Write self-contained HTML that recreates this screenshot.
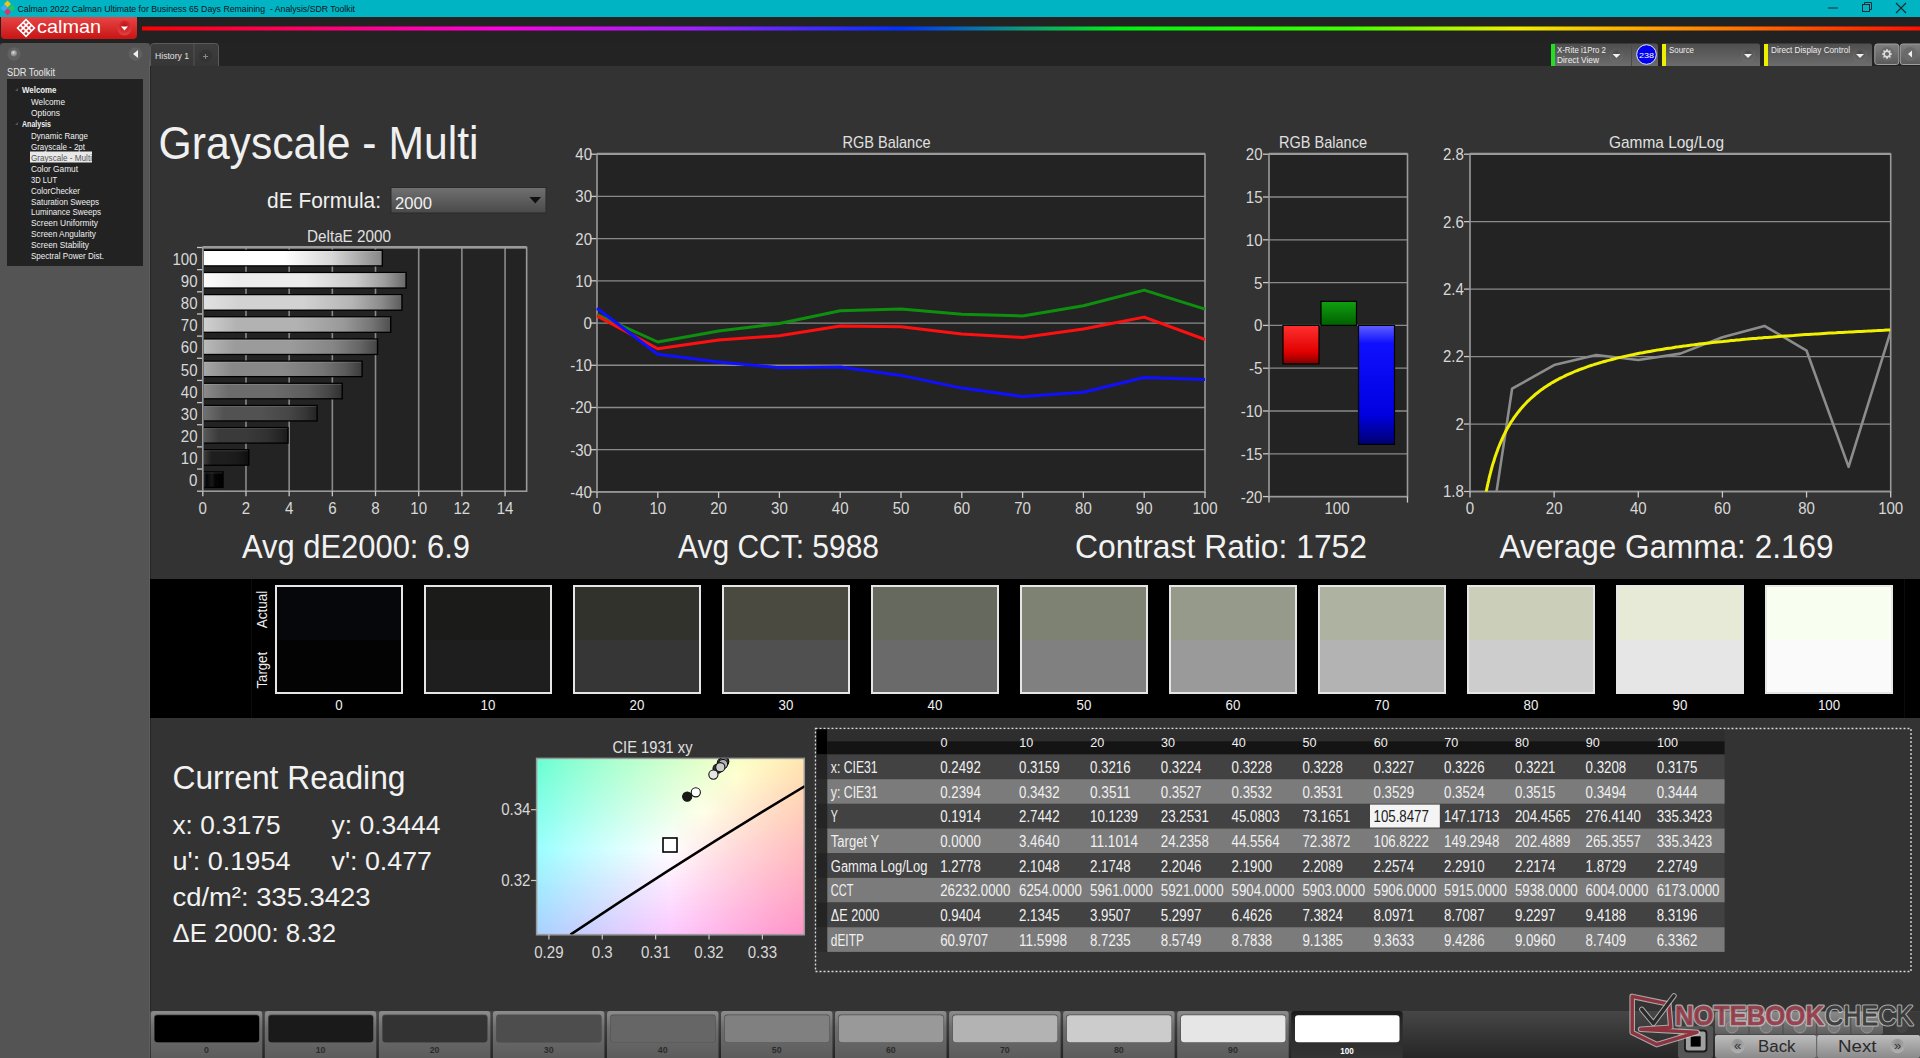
<!DOCTYPE html>
<html><head><meta charset="utf-8"><title>Calman</title>
<style>html,body{margin:0;padding:0;background:#333;overflow:hidden}svg{display:block}
text{font-family:"Liberation Sans", sans-serif;}</style></head>
<body><svg width="1920" height="1058" viewBox="0 0 1920 1058" font-family='"Liberation Sans", sans-serif'>
<defs><linearGradient id="gRed" x1="0" y1="0" x2="0" y2="1"><stop offset="0" stop-color="#e84545"/><stop offset="1" stop-color="#c81414"/></linearGradient><radialGradient id="gRedC" cx="0.5" cy="0.35" r="0.6"><stop offset="0" stop-color="#c01010"/><stop offset="1" stop-color="#e04040"/></radialGradient><linearGradient id="gRain" x1="142" y1="0" x2="1920" y2="0" gradientUnits="userSpaceOnUse"><stop offset="0" stop-color="#ff0000"/><stop offset="0.2" stop-color="#ff00e0"/><stop offset="0.31" stop-color="#a020ff"/><stop offset="0.426" stop-color="#0030ff"/><stop offset="0.5" stop-color="#10a070"/><stop offset="0.55" stop-color="#00f010"/><stop offset="0.68" stop-color="#40ff00"/><stop offset="0.773" stop-color="#f0f000"/><stop offset="0.85" stop-color="#ffa000"/><stop offset="1" stop-color="#ff1000"/></linearGradient><radialGradient id="gKnob" cx="0.5" cy="0.5" r="0.5"><stop offset="0" stop-color="#5a5a5a"/><stop offset="0.8" stop-color="#626262"/><stop offset="1" stop-color="#585858"/></radialGradient><radialGradient id="gBall" cx="0.4" cy="0.35" r="0.7"><stop offset="0" stop-color="#d8d8d8"/><stop offset="1" stop-color="#6a6a6a"/></radialGradient><linearGradient id="gTab" x1="0" y1="0" x2="0" y2="1"><stop offset="0" stop-color="#3e3e3e"/><stop offset="1" stop-color="#363636"/></linearGradient><linearGradient id="gTool" x1="0" y1="0" x2="0" y2="1"><stop offset="0" stop-color="#4e4e4e"/><stop offset="1" stop-color="#6c6c6c"/></linearGradient><radialGradient id="gDrop" cx="0.5" cy="0.3" r="0.6"><stop offset="0" stop-color="#4a4a4a"/><stop offset="1" stop-color="#6a6a6a"/></radialGradient><linearGradient id="gBtn" x1="0" y1="0" x2="0" y2="1"><stop offset="0" stop-color="#808080"/><stop offset="1" stop-color="#5a5a5a"/></linearGradient><linearGradient id="gCombo" x1="0" y1="0" x2="0" y2="1"><stop offset="0" stop-color="#707070"/><stop offset="1" stop-color="#4a4a4a"/></linearGradient><linearGradient id="gBar100" x1="0" y1="0" x2="1" y2="0"><stop offset="0" stop-color="#ffffff"/><stop offset="0.45" stop-color="#ffffff"/><stop offset="0.72" stop-color="#d7d7d7"/><stop offset="1" stop-color="#878787"/></linearGradient><linearGradient id="gBar90" x1="0" y1="0" x2="1" y2="0"><stop offset="0" stop-color="#fbfbfb"/><stop offset="0.18" stop-color="#ececec"/><stop offset="0.5" stop-color="#ececec"/><stop offset="0.75" stop-color="#cbcbcb"/><stop offset="0.9" stop-color="#9c9c9c"/><stop offset="1" stop-color="#6a6a6a"/></linearGradient><linearGradient id="gBar80" x1="0" y1="0" x2="1" y2="0"><stop offset="0" stop-color="#e1e1e1"/><stop offset="0.18" stop-color="#d2d2d2"/><stop offset="0.5" stop-color="#d2d2d2"/><stop offset="0.75" stop-color="#b5b5b5"/><stop offset="0.9" stop-color="#8b8b8b"/><stop offset="1" stop-color="#5e5e5e"/></linearGradient><linearGradient id="gBar70" x1="0" y1="0" x2="1" y2="0"><stop offset="0" stop-color="#d0d0d0"/><stop offset="0.18" stop-color="#b2b2b2"/><stop offset="0.5" stop-color="#b2b2b2"/><stop offset="0.75" stop-color="#999999"/><stop offset="0.9" stop-color="#757575"/><stop offset="1" stop-color="#505050"/></linearGradient><linearGradient id="gBar60" x1="0" y1="0" x2="1" y2="0"><stop offset="0" stop-color="#b9b9b9"/><stop offset="0.18" stop-color="#9b9b9b"/><stop offset="0.5" stop-color="#9b9b9b"/><stop offset="0.75" stop-color="#858585"/><stop offset="0.9" stop-color="#666666"/><stop offset="1" stop-color="#464646"/></linearGradient><linearGradient id="gBar50" x1="0" y1="0" x2="1" y2="0"><stop offset="0" stop-color="#a6a6a6"/><stop offset="0.18" stop-color="#888888"/><stop offset="0.5" stop-color="#888888"/><stop offset="0.75" stop-color="#757575"/><stop offset="0.9" stop-color="#5a5a5a"/><stop offset="1" stop-color="#3d3d3d"/></linearGradient><linearGradient id="gBar40" x1="0" y1="0" x2="1" y2="0"><stop offset="0" stop-color="#8a8a8a"/><stop offset="0.18" stop-color="#6c6c6c"/><stop offset="0.5" stop-color="#6c6c6c"/><stop offset="0.75" stop-color="#5d5d5d"/><stop offset="0.9" stop-color="#474747"/><stop offset="1" stop-color="#313131"/></linearGradient><linearGradient id="gBar30" x1="0" y1="0" x2="1" y2="0"><stop offset="0" stop-color="#707070"/><stop offset="0.18" stop-color="#525252"/><stop offset="0.5" stop-color="#525252"/><stop offset="0.75" stop-color="#474747"/><stop offset="0.9" stop-color="#363636"/><stop offset="1" stop-color="#252525"/></linearGradient><linearGradient id="gBar20" x1="0" y1="0" x2="1" y2="0"><stop offset="0" stop-color="#585858"/><stop offset="0.18" stop-color="#3a3a3a"/><stop offset="0.5" stop-color="#3a3a3a"/><stop offset="0.75" stop-color="#323232"/><stop offset="0.9" stop-color="#262626"/><stop offset="1" stop-color="#1a1a1a"/></linearGradient><linearGradient id="gBar10" x1="0" y1="0" x2="1" y2="0"><stop offset="0" stop-color="#3c3c3c"/><stop offset="0.18" stop-color="#1e1e1e"/><stop offset="0.5" stop-color="#1e1e1e"/><stop offset="0.75" stop-color="#1a1a1a"/><stop offset="0.9" stop-color="#141414"/><stop offset="1" stop-color="#0e0e0e"/></linearGradient><linearGradient id="gBar0" x1="0" y1="0" x2="1" y2="0"><stop offset="0" stop-color="#282828"/><stop offset="0.15" stop-color="#050505"/><stop offset="0.45" stop-color="#191919"/><stop offset="0.6" stop-color="#050505"/><stop offset="1" stop-color="#000000"/></linearGradient><linearGradient id="gR" x1="0" y1="0" x2="0" y2="1"><stop offset="0" stop-color="#ff3030"/><stop offset="0.7" stop-color="#e00000"/><stop offset="1" stop-color="#800000"/></linearGradient><linearGradient id="gG" x1="0" y1="0" x2="0" y2="1"><stop offset="0" stop-color="#10a010"/><stop offset="1" stop-color="#006000"/></linearGradient><linearGradient id="gB" x1="0" y1="0" x2="0" y2="1"><stop offset="0" stop-color="#6060ff"/><stop offset="0.15" stop-color="#1010ff"/><stop offset="0.75" stop-color="#0000e0"/><stop offset="1" stop-color="#000070"/></linearGradient><clipPath id="clipC"><rect x="536.6" y="758.4" width="267.7" height="176.2"/></clipPath><linearGradient id="cr0" x1="0" y1="0" x2="1" y2="0"><stop offset="0.000" stop-color="#67ffd3"/><stop offset="0.125" stop-color="#89ffd1"/><stop offset="0.250" stop-color="#a4ffd0"/><stop offset="0.375" stop-color="#bbffce"/><stop offset="0.500" stop-color="#d0ffcc"/><stop offset="0.625" stop-color="#e4ffca"/><stop offset="0.750" stop-color="#f8ffc8"/><stop offset="0.875" stop-color="#fff4bd"/><stop offset="1.000" stop-color="#ffe5af"/></linearGradient><linearGradient id="cr1" x1="0" y1="0" x2="1" y2="0"><stop offset="0.000" stop-color="#6affd4"/><stop offset="0.125" stop-color="#8bffd3"/><stop offset="0.250" stop-color="#a6ffd2"/><stop offset="0.375" stop-color="#bdffd0"/><stop offset="0.500" stop-color="#d2ffce"/><stop offset="0.625" stop-color="#e6ffcc"/><stop offset="0.750" stop-color="#faffca"/><stop offset="0.875" stop-color="#fff3be"/><stop offset="1.000" stop-color="#ffe3b0"/></linearGradient><linearGradient id="cr2" x1="0" y1="0" x2="1" y2="0"><stop offset="0.000" stop-color="#6cffd6"/><stop offset="0.125" stop-color="#8dffd5"/><stop offset="0.250" stop-color="#a8ffd4"/><stop offset="0.375" stop-color="#bfffd2"/><stop offset="0.500" stop-color="#d4ffd0"/><stop offset="0.625" stop-color="#e8ffce"/><stop offset="0.750" stop-color="#fcffcd"/><stop offset="0.875" stop-color="#fff1bf"/><stop offset="1.000" stop-color="#ffe1b0"/></linearGradient><linearGradient id="cr3" x1="0" y1="0" x2="1" y2="0"><stop offset="0.000" stop-color="#6effd8"/><stop offset="0.125" stop-color="#8fffd7"/><stop offset="0.250" stop-color="#a9ffd5"/><stop offset="0.375" stop-color="#c1ffd4"/><stop offset="0.500" stop-color="#d6ffd2"/><stop offset="0.625" stop-color="#eaffd1"/><stop offset="0.750" stop-color="#feffcf"/><stop offset="0.875" stop-color="#ffefbf"/><stop offset="1.000" stop-color="#ffdfb1"/></linearGradient><linearGradient id="cr4" x1="0" y1="0" x2="1" y2="0"><stop offset="0.000" stop-color="#71ffda"/><stop offset="0.125" stop-color="#91ffd9"/><stop offset="0.250" stop-color="#abffd7"/><stop offset="0.375" stop-color="#c3ffd6"/><stop offset="0.500" stop-color="#d8ffd5"/><stop offset="0.625" stop-color="#ecffd3"/><stop offset="0.750" stop-color="#fffed1"/><stop offset="0.875" stop-color="#ffedc0"/><stop offset="1.000" stop-color="#ffdeb2"/></linearGradient><linearGradient id="cr5" x1="0" y1="0" x2="1" y2="0"><stop offset="0.000" stop-color="#73ffdc"/><stop offset="0.125" stop-color="#93ffdb"/><stop offset="0.250" stop-color="#adffd9"/><stop offset="0.375" stop-color="#c5ffd8"/><stop offset="0.500" stop-color="#daffd7"/><stop offset="0.625" stop-color="#eeffd5"/><stop offset="0.750" stop-color="#fffcd1"/><stop offset="0.875" stop-color="#ffebc1"/><stop offset="1.000" stop-color="#ffdcb3"/></linearGradient><linearGradient id="cr6" x1="0" y1="0" x2="1" y2="0"><stop offset="0.000" stop-color="#75ffde"/><stop offset="0.125" stop-color="#95ffdd"/><stop offset="0.250" stop-color="#afffdc"/><stop offset="0.375" stop-color="#c7ffda"/><stop offset="0.500" stop-color="#dcffd9"/><stop offset="0.625" stop-color="#f0ffd7"/><stop offset="0.750" stop-color="#fffad2"/><stop offset="0.875" stop-color="#ffe9c1"/><stop offset="1.000" stop-color="#ffdab3"/></linearGradient><linearGradient id="cr7" x1="0" y1="0" x2="1" y2="0"><stop offset="0.000" stop-color="#78ffe0"/><stop offset="0.125" stop-color="#97ffdf"/><stop offset="0.250" stop-color="#b1ffde"/><stop offset="0.375" stop-color="#c8ffdc"/><stop offset="0.500" stop-color="#deffdb"/><stop offset="0.625" stop-color="#f2ffda"/><stop offset="0.750" stop-color="#fff8d2"/><stop offset="0.875" stop-color="#ffe7c2"/><stop offset="1.000" stop-color="#ffd8b4"/></linearGradient><linearGradient id="cr8" x1="0" y1="0" x2="1" y2="0"><stop offset="0.000" stop-color="#7affe2"/><stop offset="0.125" stop-color="#99ffe1"/><stop offset="0.250" stop-color="#b3ffe0"/><stop offset="0.375" stop-color="#caffde"/><stop offset="0.500" stop-color="#e0ffdd"/><stop offset="0.625" stop-color="#f5ffdc"/><stop offset="0.750" stop-color="#fff6d3"/><stop offset="0.875" stop-color="#ffe5c3"/><stop offset="1.000" stop-color="#ffd6b5"/></linearGradient><linearGradient id="cr9" x1="0" y1="0" x2="1" y2="0"><stop offset="0.000" stop-color="#7cffe4"/><stop offset="0.125" stop-color="#9bffe3"/><stop offset="0.250" stop-color="#b5ffe2"/><stop offset="0.375" stop-color="#ccffe1"/><stop offset="0.500" stop-color="#e2ffdf"/><stop offset="0.625" stop-color="#f7ffde"/><stop offset="0.750" stop-color="#fff4d3"/><stop offset="0.875" stop-color="#ffe3c3"/><stop offset="1.000" stop-color="#ffd5b5"/></linearGradient><linearGradient id="cr10" x1="0" y1="0" x2="1" y2="0"><stop offset="0.000" stop-color="#7effe6"/><stop offset="0.125" stop-color="#9dffe5"/><stop offset="0.250" stop-color="#b7ffe4"/><stop offset="0.375" stop-color="#ceffe3"/><stop offset="0.500" stop-color="#e4ffe2"/><stop offset="0.625" stop-color="#f9ffe1"/><stop offset="0.750" stop-color="#fff2d4"/><stop offset="0.875" stop-color="#ffe1c4"/><stop offset="1.000" stop-color="#ffd3b6"/></linearGradient><linearGradient id="cr11" x1="0" y1="0" x2="1" y2="0"><stop offset="0.000" stop-color="#81ffe8"/><stop offset="0.125" stop-color="#9fffe7"/><stop offset="0.250" stop-color="#b9ffe6"/><stop offset="0.375" stop-color="#d0ffe5"/><stop offset="0.500" stop-color="#e6ffe4"/><stop offset="0.625" stop-color="#fbffe3"/><stop offset="0.750" stop-color="#fff0d4"/><stop offset="0.875" stop-color="#ffdfc5"/><stop offset="1.000" stop-color="#ffd1b7"/></linearGradient><linearGradient id="cr12" x1="0" y1="0" x2="1" y2="0"><stop offset="0.000" stop-color="#83ffea"/><stop offset="0.125" stop-color="#a1ffe9"/><stop offset="0.250" stop-color="#bbffe8"/><stop offset="0.375" stop-color="#d3ffe7"/><stop offset="0.500" stop-color="#e8ffe6"/><stop offset="0.625" stop-color="#fdffe5"/><stop offset="0.750" stop-color="#ffeed5"/><stop offset="0.875" stop-color="#ffdec5"/><stop offset="1.000" stop-color="#ffcfb7"/></linearGradient><linearGradient id="cr13" x1="0" y1="0" x2="1" y2="0"><stop offset="0.000" stop-color="#85ffec"/><stop offset="0.125" stop-color="#a3ffeb"/><stop offset="0.250" stop-color="#bdffea"/><stop offset="0.375" stop-color="#d5ffe9"/><stop offset="0.500" stop-color="#eaffe9"/><stop offset="0.625" stop-color="#ffffe7"/><stop offset="0.750" stop-color="#ffecd5"/><stop offset="0.875" stop-color="#ffdcc6"/><stop offset="1.000" stop-color="#ffceb8"/></linearGradient><linearGradient id="cr14" x1="0" y1="0" x2="1" y2="0"><stop offset="0.000" stop-color="#87ffee"/><stop offset="0.125" stop-color="#a5ffed"/><stop offset="0.250" stop-color="#bfffec"/><stop offset="0.375" stop-color="#d7ffec"/><stop offset="0.500" stop-color="#edffeb"/><stop offset="0.625" stop-color="#fffce8"/><stop offset="0.750" stop-color="#ffead6"/><stop offset="0.875" stop-color="#ffdac6"/><stop offset="1.000" stop-color="#ffccb9"/></linearGradient><linearGradient id="cr15" x1="0" y1="0" x2="1" y2="0"><stop offset="0.000" stop-color="#8afff0"/><stop offset="0.125" stop-color="#a7ffef"/><stop offset="0.250" stop-color="#c1ffef"/><stop offset="0.375" stop-color="#d9ffee"/><stop offset="0.500" stop-color="#efffed"/><stop offset="0.625" stop-color="#fffae8"/><stop offset="0.750" stop-color="#ffe8d6"/><stop offset="0.875" stop-color="#ffd8c7"/><stop offset="1.000" stop-color="#ffcab9"/></linearGradient><linearGradient id="cr16" x1="0" y1="0" x2="1" y2="0"><stop offset="0.000" stop-color="#8cfff2"/><stop offset="0.125" stop-color="#aafff1"/><stop offset="0.250" stop-color="#c3fff1"/><stop offset="0.375" stop-color="#dbfff0"/><stop offset="0.500" stop-color="#f1fff0"/><stop offset="0.625" stop-color="#fff8e8"/><stop offset="0.750" stop-color="#ffe6d7"/><stop offset="0.875" stop-color="#ffd6c7"/><stop offset="1.000" stop-color="#ffc8ba"/></linearGradient><linearGradient id="cr17" x1="0" y1="0" x2="1" y2="0"><stop offset="0.000" stop-color="#8efff4"/><stop offset="0.125" stop-color="#acfff4"/><stop offset="0.250" stop-color="#c6fff3"/><stop offset="0.375" stop-color="#ddfff3"/><stop offset="0.500" stop-color="#f3fff2"/><stop offset="0.625" stop-color="#fff6e9"/><stop offset="0.750" stop-color="#ffe4d7"/><stop offset="0.875" stop-color="#ffd4c8"/><stop offset="1.000" stop-color="#ffc6ba"/></linearGradient><linearGradient id="cr18" x1="0" y1="0" x2="1" y2="0"><stop offset="0.000" stop-color="#90fff6"/><stop offset="0.125" stop-color="#aefff6"/><stop offset="0.250" stop-color="#c8fff5"/><stop offset="0.375" stop-color="#dffff5"/><stop offset="0.500" stop-color="#f6fff5"/><stop offset="0.625" stop-color="#fff3e9"/><stop offset="0.750" stop-color="#ffe2d8"/><stop offset="0.875" stop-color="#ffd2c8"/><stop offset="1.000" stop-color="#ffc5bb"/></linearGradient><linearGradient id="cr19" x1="0" y1="0" x2="1" y2="0"><stop offset="0.000" stop-color="#93fff8"/><stop offset="0.125" stop-color="#b0fff8"/><stop offset="0.250" stop-color="#cafff8"/><stop offset="0.375" stop-color="#e2fff7"/><stop offset="0.500" stop-color="#f8fff7"/><stop offset="0.625" stop-color="#fff1ea"/><stop offset="0.750" stop-color="#ffe0d8"/><stop offset="0.875" stop-color="#ffd0c9"/><stop offset="1.000" stop-color="#ffc3bc"/></linearGradient><linearGradient id="cr20" x1="0" y1="0" x2="1" y2="0"><stop offset="0.000" stop-color="#95fffa"/><stop offset="0.125" stop-color="#b2fffa"/><stop offset="0.250" stop-color="#ccfffa"/><stop offset="0.375" stop-color="#e4fffa"/><stop offset="0.500" stop-color="#fafffa"/><stop offset="0.625" stop-color="#ffefea"/><stop offset="0.750" stop-color="#ffddd9"/><stop offset="0.875" stop-color="#ffceca"/><stop offset="1.000" stop-color="#ffc1bc"/></linearGradient><linearGradient id="cr21" x1="0" y1="0" x2="1" y2="0"><stop offset="0.000" stop-color="#97fffd"/><stop offset="0.125" stop-color="#b4fffc"/><stop offset="0.250" stop-color="#cefffc"/><stop offset="0.375" stop-color="#e6fffc"/><stop offset="0.500" stop-color="#fdfffc"/><stop offset="0.625" stop-color="#ffedea"/><stop offset="0.750" stop-color="#ffdbd9"/><stop offset="0.875" stop-color="#ffccca"/><stop offset="1.000" stop-color="#ffbfbd"/></linearGradient><linearGradient id="cr22" x1="0" y1="0" x2="1" y2="0"><stop offset="0.000" stop-color="#99ffff"/><stop offset="0.125" stop-color="#b7ffff"/><stop offset="0.250" stop-color="#d0ffff"/><stop offset="0.375" stop-color="#e8ffff"/><stop offset="0.500" stop-color="#ffffff"/><stop offset="0.625" stop-color="#ffebeb"/><stop offset="0.750" stop-color="#ffd9d9"/><stop offset="0.875" stop-color="#ffcacb"/><stop offset="1.000" stop-color="#ffbdbd"/></linearGradient><linearGradient id="cr23" x1="0" y1="0" x2="1" y2="0"><stop offset="0.000" stop-color="#9afdff"/><stop offset="0.125" stop-color="#b7fdff"/><stop offset="0.250" stop-color="#d1fdff"/><stop offset="0.375" stop-color="#e8fdff"/><stop offset="0.500" stop-color="#fffcff"/><stop offset="0.625" stop-color="#ffe8eb"/><stop offset="0.750" stop-color="#ffd7da"/><stop offset="0.875" stop-color="#ffc9cb"/><stop offset="1.000" stop-color="#ffbbbe"/></linearGradient><linearGradient id="cr24" x1="0" y1="0" x2="1" y2="0"><stop offset="0.000" stop-color="#9bfbff"/><stop offset="0.125" stop-color="#b8fbff"/><stop offset="0.250" stop-color="#d1faff"/><stop offset="0.375" stop-color="#e9faff"/><stop offset="0.500" stop-color="#fffaff"/><stop offset="0.625" stop-color="#ffe6eb"/><stop offset="0.750" stop-color="#ffd5da"/><stop offset="0.875" stop-color="#ffc7cc"/><stop offset="1.000" stop-color="#ffbabe"/></linearGradient><linearGradient id="cr25" x1="0" y1="0" x2="1" y2="0"><stop offset="0.000" stop-color="#9cf9ff"/><stop offset="0.125" stop-color="#b8f8ff"/><stop offset="0.250" stop-color="#d1f8ff"/><stop offset="0.375" stop-color="#e9f8ff"/><stop offset="0.500" stop-color="#fff7ff"/><stop offset="0.625" stop-color="#ffe4ec"/><stop offset="0.750" stop-color="#ffd3db"/><stop offset="0.875" stop-color="#ffc5cc"/><stop offset="1.000" stop-color="#ffb8bf"/></linearGradient><linearGradient id="cr26" x1="0" y1="0" x2="1" y2="0"><stop offset="0.000" stop-color="#9df6ff"/><stop offset="0.125" stop-color="#b9f6ff"/><stop offset="0.250" stop-color="#d2f6ff"/><stop offset="0.375" stop-color="#e9f5ff"/><stop offset="0.500" stop-color="#fef5ff"/><stop offset="0.625" stop-color="#ffe2ec"/><stop offset="0.750" stop-color="#ffd1db"/><stop offset="0.875" stop-color="#ffc3cc"/><stop offset="1.000" stop-color="#ffb6c0"/></linearGradient><linearGradient id="cr27" x1="0" y1="0" x2="1" y2="0"><stop offset="0.000" stop-color="#9ef4ff"/><stop offset="0.125" stop-color="#b9f4ff"/><stop offset="0.250" stop-color="#d2f3ff"/><stop offset="0.375" stop-color="#e9f3ff"/><stop offset="0.500" stop-color="#fef2ff"/><stop offset="0.625" stop-color="#ffe0ec"/><stop offset="0.750" stop-color="#ffcfdb"/><stop offset="0.875" stop-color="#ffc1cd"/><stop offset="1.000" stop-color="#ffb4c0"/></linearGradient><linearGradient id="cr28" x1="0" y1="0" x2="1" y2="0"><stop offset="0.000" stop-color="#9ff2ff"/><stop offset="0.125" stop-color="#baf1ff"/><stop offset="0.250" stop-color="#d2f1ff"/><stop offset="0.375" stop-color="#e9f0ff"/><stop offset="0.500" stop-color="#fef0ff"/><stop offset="0.625" stop-color="#ffddec"/><stop offset="0.750" stop-color="#ffcddc"/><stop offset="0.875" stop-color="#ffbfcd"/><stop offset="1.000" stop-color="#ffb2c1"/></linearGradient><linearGradient id="cr29" x1="0" y1="0" x2="1" y2="0"><stop offset="0.000" stop-color="#9ff0ff"/><stop offset="0.125" stop-color="#baefff"/><stop offset="0.250" stop-color="#d2eeff"/><stop offset="0.375" stop-color="#e9eeff"/><stop offset="0.500" stop-color="#feedff"/><stop offset="0.625" stop-color="#ffdbed"/><stop offset="0.750" stop-color="#ffcbdc"/><stop offset="0.875" stop-color="#ffbdce"/><stop offset="1.000" stop-color="#ffb0c1"/></linearGradient><linearGradient id="cr30" x1="0" y1="0" x2="1" y2="0"><stop offset="0.000" stop-color="#a0eeff"/><stop offset="0.125" stop-color="#bbedff"/><stop offset="0.250" stop-color="#d2ecff"/><stop offset="0.375" stop-color="#e9ebff"/><stop offset="0.500" stop-color="#feeaff"/><stop offset="0.625" stop-color="#ffd9ed"/><stop offset="0.750" stop-color="#ffc9dd"/><stop offset="0.875" stop-color="#ffbbce"/><stop offset="1.000" stop-color="#ffaec2"/></linearGradient><linearGradient id="cr31" x1="0" y1="0" x2="1" y2="0"><stop offset="0.000" stop-color="#a1ebff"/><stop offset="0.125" stop-color="#bbebff"/><stop offset="0.250" stop-color="#d3eaff"/><stop offset="0.375" stop-color="#e9e9ff"/><stop offset="0.500" stop-color="#fee8ff"/><stop offset="0.625" stop-color="#ffd7ed"/><stop offset="0.750" stop-color="#ffc7dd"/><stop offset="0.875" stop-color="#ffb9cf"/><stop offset="1.000" stop-color="#ffadc2"/></linearGradient><linearGradient id="cr32" x1="0" y1="0" x2="1" y2="0"><stop offset="0.000" stop-color="#a2e9ff"/><stop offset="0.125" stop-color="#bbe8ff"/><stop offset="0.250" stop-color="#d3e7ff"/><stop offset="0.375" stop-color="#e9e6ff"/><stop offset="0.500" stop-color="#fde5ff"/><stop offset="0.625" stop-color="#ffd5ee"/><stop offset="0.750" stop-color="#ffc5dd"/><stop offset="0.875" stop-color="#ffb7cf"/><stop offset="1.000" stop-color="#ffabc3"/></linearGradient><linearGradient id="cr33" x1="0" y1="0" x2="1" y2="0"><stop offset="0.000" stop-color="#a2e7ff"/><stop offset="0.125" stop-color="#bce6ff"/><stop offset="0.250" stop-color="#d3e5ff"/><stop offset="0.375" stop-color="#e9e4ff"/><stop offset="0.500" stop-color="#fde3ff"/><stop offset="0.625" stop-color="#ffd2ee"/><stop offset="0.750" stop-color="#ffc3de"/><stop offset="0.875" stop-color="#ffb5d0"/><stop offset="1.000" stop-color="#ffa9c3"/></linearGradient><linearGradient id="cr34" x1="0" y1="0" x2="1" y2="0"><stop offset="0.000" stop-color="#a3e5ff"/><stop offset="0.125" stop-color="#bce4ff"/><stop offset="0.250" stop-color="#d3e3ff"/><stop offset="0.375" stop-color="#e9e2ff"/><stop offset="0.500" stop-color="#fde0ff"/><stop offset="0.625" stop-color="#ffd0ee"/><stop offset="0.750" stop-color="#ffc1de"/><stop offset="0.875" stop-color="#ffb3d0"/><stop offset="1.000" stop-color="#ffa7c4"/></linearGradient><linearGradient id="cr35" x1="0" y1="0" x2="1" y2="0"><stop offset="0.000" stop-color="#a4e3ff"/><stop offset="0.125" stop-color="#bde2ff"/><stop offset="0.250" stop-color="#d3e0ff"/><stop offset="0.375" stop-color="#e9dfff"/><stop offset="0.500" stop-color="#fddeff"/><stop offset="0.625" stop-color="#ffceee"/><stop offset="0.750" stop-color="#ffbfde"/><stop offset="0.875" stop-color="#ffb1d1"/><stop offset="1.000" stop-color="#ffa5c4"/></linearGradient><linearGradient id="cr36" x1="0" y1="0" x2="1" y2="0"><stop offset="0.000" stop-color="#a4e1ff"/><stop offset="0.125" stop-color="#bddfff"/><stop offset="0.250" stop-color="#d4deff"/><stop offset="0.375" stop-color="#e9ddff"/><stop offset="0.500" stop-color="#fddbff"/><stop offset="0.625" stop-color="#ffccef"/><stop offset="0.750" stop-color="#ffbddf"/><stop offset="0.875" stop-color="#ffafd1"/><stop offset="1.000" stop-color="#ffa3c5"/></linearGradient><linearGradient id="cr37" x1="0" y1="0" x2="1" y2="0"><stop offset="0.000" stop-color="#a5deff"/><stop offset="0.125" stop-color="#bdddff"/><stop offset="0.250" stop-color="#d4dcff"/><stop offset="0.375" stop-color="#e9daff"/><stop offset="0.500" stop-color="#fdd9ff"/><stop offset="0.625" stop-color="#ffcaef"/><stop offset="0.750" stop-color="#ffbadf"/><stop offset="0.875" stop-color="#ffadd1"/><stop offset="1.000" stop-color="#ffa1c5"/></linearGradient><linearGradient id="cr38" x1="0" y1="0" x2="1" y2="0"><stop offset="0.000" stop-color="#a6dcff"/><stop offset="0.125" stop-color="#bedbff"/><stop offset="0.250" stop-color="#d4daff"/><stop offset="0.375" stop-color="#e9d8ff"/><stop offset="0.500" stop-color="#fdd6ff"/><stop offset="0.625" stop-color="#ffc7ef"/><stop offset="0.750" stop-color="#ffb8e0"/><stop offset="0.875" stop-color="#ffabd2"/><stop offset="1.000" stop-color="#ff9fc6"/></linearGradient><linearGradient id="cr39" x1="0" y1="0" x2="1" y2="0"><stop offset="0.000" stop-color="#a6daff"/><stop offset="0.125" stop-color="#bed9ff"/><stop offset="0.250" stop-color="#d4d7ff"/><stop offset="0.375" stop-color="#e9d6ff"/><stop offset="0.500" stop-color="#fcd4ff"/><stop offset="0.625" stop-color="#ffc5f0"/><stop offset="0.750" stop-color="#ffb6e0"/><stop offset="0.875" stop-color="#ffa9d2"/><stop offset="1.000" stop-color="#ff9dc6"/></linearGradient><linearGradient id="cr40" x1="0" y1="0" x2="1" y2="0"><stop offset="0.000" stop-color="#a7d8ff"/><stop offset="0.125" stop-color="#bfd7ff"/><stop offset="0.250" stop-color="#d4d5ff"/><stop offset="0.375" stop-color="#e9d3ff"/><stop offset="0.500" stop-color="#fcd1ff"/><stop offset="0.625" stop-color="#ffc3f0"/><stop offset="0.750" stop-color="#ffb4e0"/><stop offset="0.875" stop-color="#ffa7d3"/><stop offset="1.000" stop-color="#ff9bc6"/></linearGradient><linearGradient id="cr41" x1="0" y1="0" x2="1" y2="0"><stop offset="0.000" stop-color="#a7d6ff"/><stop offset="0.125" stop-color="#bfd4ff"/><stop offset="0.250" stop-color="#d4d3ff"/><stop offset="0.375" stop-color="#e9d1ff"/><stop offset="0.500" stop-color="#fccfff"/><stop offset="0.625" stop-color="#ffc1f0"/><stop offset="0.750" stop-color="#ffb2e1"/><stop offset="0.875" stop-color="#ffa5d3"/><stop offset="1.000" stop-color="#ff99c7"/></linearGradient><linearGradient id="cr42" x1="0" y1="0" x2="1" y2="0"><stop offset="0.000" stop-color="#a8d4ff"/><stop offset="0.125" stop-color="#bfd2ff"/><stop offset="0.250" stop-color="#d5d0ff"/><stop offset="0.375" stop-color="#e9cfff"/><stop offset="0.500" stop-color="#fcccff"/><stop offset="0.625" stop-color="#ffbef0"/><stop offset="0.750" stop-color="#ffb0e1"/><stop offset="0.875" stop-color="#ffa3d3"/><stop offset="1.000" stop-color="#ff97c7"/></linearGradient><linearGradient id="cr43" x1="0" y1="0" x2="1" y2="0"><stop offset="0.000" stop-color="#a9d2ff"/><stop offset="0.125" stop-color="#c0d0ff"/><stop offset="0.250" stop-color="#d5ceff"/><stop offset="0.375" stop-color="#e9ccff"/><stop offset="0.500" stop-color="#fccaff"/><stop offset="0.625" stop-color="#ffbcf1"/><stop offset="0.750" stop-color="#ffaee1"/><stop offset="0.875" stop-color="#ffa1d4"/><stop offset="1.000" stop-color="#ff95c8"/></linearGradient><linearGradient id="gBar" x1="0" y1="0" x2="0" y2="1"><stop offset="0" stop-color="#464646"/><stop offset="1" stop-color="#262626"/></linearGradient><linearGradient id="gSw" x1="0" y1="0" x2="0" y2="1"><stop offset="0" stop-color="#8c8c8c"/><stop offset="0.35" stop-color="#6e6e6e"/><stop offset="1" stop-color="#5c5c5c"/></linearGradient><linearGradient id="gSwSel" x1="0" y1="0" x2="0" y2="1"><stop offset="0" stop-color="#1a1a1a"/><stop offset="0.3" stop-color="#2a2a2a"/><stop offset="1" stop-color="#343434"/></linearGradient><linearGradient id="gIco" x1="0" y1="0" x2="0" y2="1"><stop offset="0" stop-color="#8a8a8a"/><stop offset="1" stop-color="#5e5e5e"/></linearGradient><linearGradient id="gBk" x1="0" y1="0" x2="0" y2="1"><stop offset="0" stop-color="#bdbdbd"/><stop offset="1" stop-color="#8a8a8a"/></linearGradient><radialGradient id="gArr" cx="0.5" cy="0.3" r="0.7"><stop offset="0" stop-color="#8c8c8c"/><stop offset="1" stop-color="#b4b4b4"/></radialGradient></defs>
<rect x="0" y="0" width="1920" height="1058" fill="#333333"/>
<rect x="0" y="0" width="1920" height="17" fill="#00b4c4"/>
<rect x="0" y="17" width="1920" height="26" fill="#222222"/>
<rect x="150" y="43" width="1770" height="23" fill="#232323"/>
<rect x="0" y="43" width="150" height="1015" fill="#545454" rx="4"/>
<rect x="0" y="60" width="150" height="998" fill="#545454"/>
<rect x="149" y="60" width="1" height="998" fill="#5e5e5e"/>
<rect x="150" y="66" width="1" height="992" fill="#262626"/>
<g transform="translate(8,8)"><rect x="-3" y="-6.5" width="5" height="5" fill="#f2c21b" transform="rotate(45 -0.5 -4)"/><rect x="-6.5" y="-2.5" width="5" height="5" fill="#3fa9f5" transform="rotate(45 -4 0)"/><rect x="1.5" y="-2.5" width="5" height="5" fill="#22c55e" transform="rotate(45 4 0)"/><rect x="-3" y="1.5" width="5" height="5" fill="#e0336b" transform="rotate(45 -0.5 4)"/></g>
<text x="17.5" y="12.3" font-size="9.4" fill="#081418" textLength="337.5" lengthAdjust="spacingAndGlyphs">Calman 2022 Calman Ultimate for Business 65 Days Remaining  - Analysis/SDR Toolkit</text>
<line x1="1828" y1="8" x2="1838" y2="8" stroke="#1a2a30" stroke-width="1"/>
<rect x="1862.5" y="4.5" width="7" height="7" fill="none" stroke="#1a2a30" stroke-width="1"/>
<path d="M1864.5 4.5 V2.5 H1871.5 V9.5 H1869.5" fill="none" stroke="#1a2a30" stroke-width="1"/>
<path d="M1896 3 L1906 13 M1906 3 L1896 13" stroke="#1a2a30" stroke-width="1.2"/>
<path d="M1 17 H137 V35 Q137 39 133 39 H5 Q1 39 1 35 Z" fill="url(#gRed)"/>
<g transform="translate(26,28) rotate(45)" fill="none" stroke="#fff" stroke-width="1.6"><rect x="-6" y="-6" width="12" height="12"/><line x1="-6" y1="-2" x2="6" y2="-2"/><line x1="-6" y1="2" x2="6" y2="2"/><line x1="-2" y1="-6" x2="-2" y2="6"/><line x1="2" y1="-6" x2="2" y2="6"/></g>
<text x="37" y="33" font-size="19" fill="#ffffff" textLength="64" lengthAdjust="spacingAndGlyphs">calman</text>
<ellipse cx="124.5" cy="28" rx="7" ry="7.5" fill="url(#gRedC)"/>
<path d="M121 26.5 L128 26.5 L124.5 30.5 Z" fill="#fff"/>
<rect x="142" y="26.5" width="1778" height="4" fill="url(#gRain)"/>
<circle cx="14" cy="54" r="7" fill="url(#gKnob)"/>
<circle cx="14" cy="53.5" r="3.2" fill="url(#gBall)"/>
<circle cx="135.5" cy="54" r="7" fill="url(#gKnob)"/>
<path d="M133 54 L138 50 L138 58 Z" fill="#f0f0f0"/>
<text x="7" y="76" font-size="10" fill="#e8e8e8" textLength="48" lengthAdjust="spacingAndGlyphs">SDR Toolkit</text>
<rect x="7" y="79" width="136" height="187" fill="#222222"/>
<text x="22" y="93" font-size="8.2" fill="#f0f0f0" textLength="34.5" lengthAdjust="spacingAndGlyphs" font-weight="bold">Welcome</text>
<path d="M15 91 L18 88 L18 91 Z" fill="#555"/>
<text x="31" y="105" font-size="8.2" fill="#f0f0f0" textLength="34" lengthAdjust="spacingAndGlyphs">Welcome</text>
<text x="31" y="115.5" font-size="8.2" fill="#f0f0f0" textLength="29" lengthAdjust="spacingAndGlyphs">Options</text>
<text x="22" y="127" font-size="8.2" fill="#f0f0f0" textLength="29" lengthAdjust="spacingAndGlyphs" font-weight="bold">Analysis</text>
<path d="M15 125 L18 122 L18 125 Z" fill="#555"/>
<text x="31" y="139" font-size="8.2" fill="#f0f0f0" textLength="57" lengthAdjust="spacingAndGlyphs">Dynamic Range</text>
<text x="31" y="149.5" font-size="8.2" fill="#f0f0f0" textLength="54" lengthAdjust="spacingAndGlyphs">Grayscale - 2pt</text>
<rect x="30" y="151.5" width="62" height="11" fill="#e8e8e8"/>
<text x="31" y="161" font-size="8.2" fill="#555555" textLength="61" lengthAdjust="spacingAndGlyphs">Grayscale - Multi</text>
<text x="31" y="172" font-size="8.2" fill="#f0f0f0" textLength="47" lengthAdjust="spacingAndGlyphs">Color Gamut</text>
<text x="31" y="182.5" font-size="8.2" fill="#f0f0f0" textLength="26" lengthAdjust="spacingAndGlyphs">3D LUT</text>
<text x="31" y="193.5" font-size="8.2" fill="#f0f0f0" textLength="49" lengthAdjust="spacingAndGlyphs">ColorChecker</text>
<text x="31" y="204.5" font-size="8.2" fill="#f0f0f0" textLength="68" lengthAdjust="spacingAndGlyphs">Saturation Sweeps</text>
<text x="31" y="215" font-size="8.2" fill="#f0f0f0" textLength="70" lengthAdjust="spacingAndGlyphs">Luminance Sweeps</text>
<text x="31" y="226" font-size="8.2" fill="#f0f0f0" textLength="67" lengthAdjust="spacingAndGlyphs">Screen Uniformity</text>
<text x="31" y="237" font-size="8.2" fill="#f0f0f0" textLength="65" lengthAdjust="spacingAndGlyphs">Screen Angularity</text>
<text x="31" y="247.5" font-size="8.2" fill="#f0f0f0" textLength="58" lengthAdjust="spacingAndGlyphs">Screen Stability</text>
<text x="31" y="258.5" font-size="8.2" fill="#f0f0f0" textLength="73" lengthAdjust="spacingAndGlyphs">Spectral Power Dist.</text>
<path d="M150.5 66 V46.5 Q150.5 43.5 153.5 43.5 H215.5 Q218.5 43.5 218.5 46.5 V66 Z" fill="url(#gTab)"/>
<path d="M150.5 66 V46.5 Q150.5 43.5 153.5 43.5 H215.5 Q218.5 43.5 218.5 46.5 V66" fill="none" stroke="#5a5a5a" stroke-width="1"/>
<line x1="194" y1="44" x2="194" y2="66" stroke="#505050" stroke-width="1.2"/>
<text x="155" y="59" font-size="9" fill="#e0e0e0" textLength="34" lengthAdjust="spacingAndGlyphs">History 1</text>
<circle cx="205.5" cy="56" r="6.5" fill="#333"/>
<path d="M203 56.5 H208 M205.5 54 V59" stroke="#888" stroke-width="1"/>
<path d="M1551 66 V46 Q1551 43.5 1553.5 43.5 H1655.5 Q1658 43.5 1658 46 V66 Z" fill="url(#gTool)"/>
<rect x="1551" y="44" width="4" height="22" fill="#22dd22"/>
<text x="1557" y="52.5" font-size="8.5" fill="#eeeeee" textLength="49" lengthAdjust="spacingAndGlyphs">X-Rite i1Pro 2</text>
<text x="1557" y="63" font-size="8.5" fill="#eeeeee" textLength="42" lengthAdjust="spacingAndGlyphs">Direct View</text>
<circle cx="1616.5" cy="55.5" r="7" fill="url(#gDrop)"/>
<path d="M1612.5 54 H1620.5 L1616.5 58 Z" fill="#f0f0f0"/>
<line x1="1631.5" y1="45" x2="1631.5" y2="66" stroke="#4a4a4a" stroke-width="1"/>
<circle cx="1646.5" cy="54.5" r="9.8" fill="#0000ee" stroke="#e8e8ff" stroke-width="1"/>
<text x="1646.5" y="57.5" font-size="7.5" fill="#ffffff" text-anchor="middle" textLength="15" lengthAdjust="spacingAndGlyphs">238</text>
<path d="M1662 66 V46 Q1662 43.5 1664.5 43.5 H1757.5 Q1760 43.5 1760 46 V66 Z" fill="url(#gTool)"/>
<rect x="1662" y="44" width="4" height="22" fill="#eeee00"/>
<text x="1669" y="52.5" font-size="8.5" fill="#eeeeee" textLength="25" lengthAdjust="spacingAndGlyphs">Source</text>
<circle cx="1748" cy="55.5" r="7" fill="url(#gDrop)"/>
<path d="M1744 54 H1752 L1748 58 Z" fill="#f0f0f0"/>
<path d="M1764 66 V46 Q1764 43.5 1766.5 43.5 H1869.5 Q1872 43.5 1872 46 V66 Z" fill="url(#gTool)"/>
<rect x="1764" y="44" width="4" height="22" fill="#eeee00"/>
<text x="1771" y="52.5" font-size="8.5" fill="#eeeeee" textLength="79" lengthAdjust="spacingAndGlyphs">Direct Display Control</text>
<circle cx="1860" cy="55.5" r="7" fill="url(#gDrop)"/>
<path d="M1856 54 H1864 L1860 58 Z" fill="#f0f0f0"/>
<rect x="1874.8" y="44" width="24" height="20.5" rx="2.5" fill="url(#gBtn)" stroke="#a0a0a0" stroke-width="1"/>
<circle cx="1887" cy="54" r="7" fill="#6a6a6a"/>
<polygon points="1891.98,53.51 1891.98,54.49 1890.54,55.07 1890.26,55.74 1890.87,57.17 1890.17,57.87 1888.74,57.26 1888.07,57.54 1887.49,58.98 1886.51,58.98 1885.93,57.54 1885.26,57.26 1883.83,57.87 1883.13,57.17 1883.74,55.74 1883.46,55.07 1882.02,54.49 1882.02,53.51 1883.46,52.93 1883.74,52.26 1883.13,50.83 1883.83,50.13 1885.26,50.74 1885.93,50.46 1886.51,49.02 1887.49,49.02 1888.07,50.46 1888.74,50.74 1890.17,50.13 1890.87,50.83 1890.26,52.26 1890.54,52.93" fill="#dcdcdc"/>
<circle cx="1887" cy="54" r="2.1" fill="#6a6a6a"/>
<rect x="1900.3" y="44" width="24" height="20.5" rx="2.5" fill="url(#gBtn)" stroke="#a0a0a0" stroke-width="1"/>
<circle cx="1910" cy="54" r="7" fill="#6a6a6a"/>
<path d="M1908 54 L1912 50.5 L1912 57.5 Z" fill="#f0f0f0"/>
<text x="158.5" y="158.8" font-size="47" fill="#f0f0f0" textLength="320" lengthAdjust="spacingAndGlyphs">Grayscale - Multi</text>
<text x="267" y="208" font-size="21.5" fill="#f0f0f0" textLength="114" lengthAdjust="spacingAndGlyphs">dE Formula:</text>
<rect x="391" y="187.5" width="155" height="25.5" fill="url(#gCombo)" stroke="#2a2a2a" stroke-width="1"/>
<text x="395" y="209" font-size="17" fill="#f0f0f0" textLength="37" lengthAdjust="spacingAndGlyphs">2000</text>
<path d="M529.5 197 H541 L535.25 203.5 Z" fill="#111"/>
<text x="349" y="242" font-size="16.2" fill="#e0e0e0" text-anchor="middle" textLength="84" lengthAdjust="spacingAndGlyphs">DeltaE 2000</text>
<rect x="202.8" y="247.5" width="323.8500000000001" height="243.7" fill="#232323"/>
<line x1="245.98000000000002" y1="247.5" x2="245.98000000000002" y2="491.2" stroke="#8a8a8a" stroke-width="1.6"/>
<line x1="289.16" y1="247.5" x2="289.16" y2="491.2" stroke="#8a8a8a" stroke-width="1.6"/>
<line x1="332.34000000000003" y1="247.5" x2="332.34000000000003" y2="491.2" stroke="#8a8a8a" stroke-width="1.6"/>
<line x1="375.52" y1="247.5" x2="375.52" y2="491.2" stroke="#8a8a8a" stroke-width="1.6"/>
<line x1="418.70000000000005" y1="247.5" x2="418.70000000000005" y2="491.2" stroke="#8a8a8a" stroke-width="1.6"/>
<line x1="461.88" y1="247.5" x2="461.88" y2="491.2" stroke="#8a8a8a" stroke-width="1.6"/>
<line x1="505.06" y1="247.5" x2="505.06" y2="491.2" stroke="#8a8a8a" stroke-width="1.6"/>
<rect x="203.8" y="249.7" width="179.22016399999998" height="16.8" fill="#000000"/>
<rect x="203.8" y="251.0" width="177.82016399999998" height="14.2" fill="url(#gBar100)"/>
<rect x="203.8" y="251.0" width="177.82016399999998" height="0.8" fill="#ffffff" opacity="0.18"/>
<text x="197.5" y="264.7772727272727" font-size="16" fill="#d8d8d8" text-anchor="end" textLength="25.1" lengthAdjust="spacingAndGlyphs">100</text>
<rect x="203.8" y="271.8545454545454" width="202.951892" height="16.8" fill="#000000"/>
<rect x="203.8" y="273.1545454545454" width="201.55189199999998" height="14.2" fill="url(#gBar90)"/>
<rect x="203.8" y="273.1545454545454" width="201.55189199999998" height="0.8" fill="#ffffff" opacity="0.18"/>
<text x="197.5" y="286.93181818181813" font-size="16" fill="#d8d8d8" text-anchor="end" textLength="16.7" lengthAdjust="spacingAndGlyphs">90</text>
<rect x="203.8" y="294.0090909090909" width="198.86922299999998" height="16.8" fill="#000000"/>
<rect x="203.8" y="295.3090909090909" width="197.46922299999997" height="14.2" fill="url(#gBar80)"/>
<rect x="203.8" y="295.3090909090909" width="197.46922299999997" height="0.8" fill="#ffffff" opacity="0.18"/>
<text x="197.5" y="309.0863636363636" font-size="16" fill="#d8d8d8" text-anchor="end" textLength="16.7" lengthAdjust="spacingAndGlyphs">80</text>
<rect x="203.8" y="316.16363636363633" width="187.620833" height="16.8" fill="#000000"/>
<rect x="203.8" y="317.46363636363634" width="186.220833" height="14.2" fill="url(#gBar70)"/>
<rect x="203.8" y="317.46363636363634" width="186.220833" height="0.8" fill="#ffffff" opacity="0.18"/>
<text x="197.5" y="331.24090909090904" font-size="16" fill="#d8d8d8" text-anchor="end" textLength="16.7" lengthAdjust="spacingAndGlyphs">70</text>
<rect x="203.8" y="338.3181818181818" width="174.41638899999998" height="16.8" fill="#000000"/>
<rect x="203.8" y="339.6181818181818" width="173.01638899999998" height="14.2" fill="url(#gBar60)"/>
<rect x="203.8" y="339.6181818181818" width="173.01638899999998" height="0.8" fill="#ffffff" opacity="0.18"/>
<text x="197.5" y="353.3954545454545" font-size="16" fill="#d8d8d8" text-anchor="end" textLength="16.7" lengthAdjust="spacingAndGlyphs">60</text>
<rect x="203.8" y="360.47272727272724" width="158.98601599999998" height="16.8" fill="#000000"/>
<rect x="203.8" y="361.77272727272725" width="157.58601599999997" height="14.2" fill="url(#gBar50)"/>
<rect x="203.8" y="361.77272727272725" width="157.58601599999997" height="0.8" fill="#ffffff" opacity="0.18"/>
<text x="197.5" y="375.54999999999995" font-size="16" fill="#d8d8d8" text-anchor="end" textLength="16.7" lengthAdjust="spacingAndGlyphs">50</text>
<rect x="203.8" y="382.62727272727267" width="139.127534" height="16.8" fill="#000000"/>
<rect x="203.8" y="383.9272727272727" width="137.727534" height="14.2" fill="url(#gBar40)"/>
<rect x="203.8" y="383.9272727272727" width="137.727534" height="0.8" fill="#ffffff" opacity="0.18"/>
<text x="197.5" y="397.7045454545454" font-size="16" fill="#d8d8d8" text-anchor="end" textLength="16.7" lengthAdjust="spacingAndGlyphs">40</text>
<rect x="203.8" y="404.78181818181815" width="114.02052299999998" height="16.8" fill="#000000"/>
<rect x="203.8" y="406.08181818181816" width="112.62052299999999" height="14.2" fill="url(#gBar30)"/>
<rect x="203.8" y="406.08181818181816" width="112.62052299999999" height="0.8" fill="#ffffff" opacity="0.18"/>
<text x="197.5" y="419.85909090909087" font-size="16" fill="#d8d8d8" text-anchor="end" textLength="16.7" lengthAdjust="spacingAndGlyphs">30</text>
<rect x="203.8" y="426.93636363636364" width="84.895613" height="16.8" fill="#000000"/>
<rect x="203.8" y="428.23636363636365" width="83.495613" height="14.2" fill="url(#gBar20)"/>
<rect x="203.8" y="428.23636363636365" width="83.495613" height="0.8" fill="#ffffff" opacity="0.18"/>
<text x="197.5" y="442.01363636363635" font-size="16" fill="#d8d8d8" text-anchor="end" textLength="16.7" lengthAdjust="spacingAndGlyphs">20</text>
<rect x="203.8" y="449.09090909090907" width="45.683855" height="16.8" fill="#000000"/>
<rect x="203.8" y="450.3909090909091" width="44.283855" height="14.2" fill="url(#gBar10)"/>
<rect x="203.8" y="450.3909090909091" width="44.283855" height="0.8" fill="#ffffff" opacity="0.18"/>
<text x="197.5" y="464.1681818181818" font-size="16" fill="#d8d8d8" text-anchor="end" textLength="16.7" lengthAdjust="spacingAndGlyphs">10</text>
<rect x="203.8" y="471.2454545454545" width="19.903236000000003" height="16.8" fill="#000000"/>
<rect x="203.8" y="472.5454545454545" width="18.503236" height="14.2" fill="url(#gBar0)"/>
<rect x="203.8" y="472.5454545454545" width="18.503236" height="0.8" fill="#ffffff" opacity="0.18"/>
<text x="197.5" y="486.3227272727272" font-size="16" fill="#d8d8d8" text-anchor="end" textLength="8.4" lengthAdjust="spacingAndGlyphs">0</text>
<line x1="197" y1="247.5" x2="203" y2="247.5" stroke="#c8c8c8" stroke-width="1.3"/>
<line x1="197" y1="269.6545454545454" x2="203" y2="269.6545454545454" stroke="#c8c8c8" stroke-width="1.3"/>
<line x1="197" y1="291.8090909090909" x2="203" y2="291.8090909090909" stroke="#c8c8c8" stroke-width="1.3"/>
<line x1="197" y1="313.96363636363634" x2="203" y2="313.96363636363634" stroke="#c8c8c8" stroke-width="1.3"/>
<line x1="197" y1="336.1181818181818" x2="203" y2="336.1181818181818" stroke="#c8c8c8" stroke-width="1.3"/>
<line x1="197" y1="358.27272727272725" x2="203" y2="358.27272727272725" stroke="#c8c8c8" stroke-width="1.3"/>
<line x1="197" y1="380.4272727272727" x2="203" y2="380.4272727272727" stroke="#c8c8c8" stroke-width="1.3"/>
<line x1="197" y1="402.58181818181816" x2="203" y2="402.58181818181816" stroke="#c8c8c8" stroke-width="1.3"/>
<line x1="197" y1="424.73636363636365" x2="203" y2="424.73636363636365" stroke="#c8c8c8" stroke-width="1.3"/>
<line x1="197" y1="446.8909090909091" x2="203" y2="446.8909090909091" stroke="#c8c8c8" stroke-width="1.3"/>
<line x1="197" y1="469.0454545454545" x2="203" y2="469.0454545454545" stroke="#c8c8c8" stroke-width="1.3"/>
<line x1="197" y1="491.2" x2="203" y2="491.2" stroke="#c8c8c8" stroke-width="1.3"/>
<rect x="202.8" y="247.5" width="323.8500000000001" height="243.7" fill="none" stroke="#9a9a9a" stroke-width="1.6"/>
<line x1="202.8" y1="247.2" x2="526.6500000000001" y2="247.2" stroke="#9a9a9a" stroke-width="2.4"/>
<line x1="202.8" y1="491.2" x2="202.8" y2="496.2" stroke="#c8c8c8" stroke-width="1.3"/>
<text x="202.8" y="514.2" font-size="16" fill="#d8d8d8" text-anchor="middle" textLength="8.4" lengthAdjust="spacingAndGlyphs">0</text>
<line x1="245.98000000000002" y1="491.2" x2="245.98000000000002" y2="496.2" stroke="#c8c8c8" stroke-width="1.3"/>
<text x="245.98000000000002" y="514.2" font-size="16" fill="#d8d8d8" text-anchor="middle" textLength="8.4" lengthAdjust="spacingAndGlyphs">2</text>
<line x1="289.16" y1="491.2" x2="289.16" y2="496.2" stroke="#c8c8c8" stroke-width="1.3"/>
<text x="289.16" y="514.2" font-size="16" fill="#d8d8d8" text-anchor="middle" textLength="8.4" lengthAdjust="spacingAndGlyphs">4</text>
<line x1="332.34000000000003" y1="491.2" x2="332.34000000000003" y2="496.2" stroke="#c8c8c8" stroke-width="1.3"/>
<text x="332.34000000000003" y="514.2" font-size="16" fill="#d8d8d8" text-anchor="middle" textLength="8.4" lengthAdjust="spacingAndGlyphs">6</text>
<line x1="375.52" y1="491.2" x2="375.52" y2="496.2" stroke="#c8c8c8" stroke-width="1.3"/>
<text x="375.52" y="514.2" font-size="16" fill="#d8d8d8" text-anchor="middle" textLength="8.4" lengthAdjust="spacingAndGlyphs">8</text>
<line x1="418.70000000000005" y1="491.2" x2="418.70000000000005" y2="496.2" stroke="#c8c8c8" stroke-width="1.3"/>
<text x="418.70000000000005" y="514.2" font-size="16" fill="#d8d8d8" text-anchor="middle" textLength="16.7" lengthAdjust="spacingAndGlyphs">10</text>
<line x1="461.88" y1="491.2" x2="461.88" y2="496.2" stroke="#c8c8c8" stroke-width="1.3"/>
<text x="461.88" y="514.2" font-size="16" fill="#d8d8d8" text-anchor="middle" textLength="16.7" lengthAdjust="spacingAndGlyphs">12</text>
<line x1="505.06" y1="491.2" x2="505.06" y2="496.2" stroke="#c8c8c8" stroke-width="1.3"/>
<text x="505.06" y="514.2" font-size="16" fill="#d8d8d8" text-anchor="middle" textLength="16.7" lengthAdjust="spacingAndGlyphs">14</text>
<text x="356" y="558" font-size="33" fill="#f2f2f2" text-anchor="middle" textLength="228" lengthAdjust="spacingAndGlyphs">Avg dE2000: 6.9</text>
<text x="886.5" y="148" font-size="16.2" fill="#e0e0e0" text-anchor="middle" textLength="88" lengthAdjust="spacingAndGlyphs">RGB Balance</text>
<rect x="597" y="154.2" width="608" height="337.7" fill="#232323"/>
<line x1="597" y1="154.2" x2="1205" y2="154.2" stroke="#8a8a8a" stroke-width="1.3"/>
<line x1="591" y1="154.2" x2="597" y2="154.2" stroke="#c8c8c8" stroke-width="1.3"/>
<text x="592" y="160.1" font-size="16" fill="#d8d8d8" text-anchor="end" textLength="16.7" lengthAdjust="spacingAndGlyphs">40</text>
<line x1="597" y1="196.4125" x2="1205" y2="196.4125" stroke="#8a8a8a" stroke-width="1.3"/>
<line x1="591" y1="196.4125" x2="597" y2="196.4125" stroke="#c8c8c8" stroke-width="1.3"/>
<text x="592" y="202.3125" font-size="16" fill="#d8d8d8" text-anchor="end" textLength="16.7" lengthAdjust="spacingAndGlyphs">30</text>
<line x1="597" y1="238.625" x2="1205" y2="238.625" stroke="#8a8a8a" stroke-width="1.3"/>
<line x1="591" y1="238.625" x2="597" y2="238.625" stroke="#c8c8c8" stroke-width="1.3"/>
<text x="592" y="244.525" font-size="16" fill="#d8d8d8" text-anchor="end" textLength="16.7" lengthAdjust="spacingAndGlyphs">20</text>
<line x1="597" y1="280.8375" x2="1205" y2="280.8375" stroke="#8a8a8a" stroke-width="1.3"/>
<line x1="591" y1="280.8375" x2="597" y2="280.8375" stroke="#c8c8c8" stroke-width="1.3"/>
<text x="592" y="286.73749999999995" font-size="16" fill="#d8d8d8" text-anchor="end" textLength="16.7" lengthAdjust="spacingAndGlyphs">10</text>
<line x1="597" y1="323.04999999999995" x2="1205" y2="323.04999999999995" stroke="#8a8a8a" stroke-width="1.3"/>
<line x1="591" y1="323.04999999999995" x2="597" y2="323.04999999999995" stroke="#c8c8c8" stroke-width="1.3"/>
<text x="592" y="328.94999999999993" font-size="16" fill="#d8d8d8" text-anchor="end" textLength="8.4" lengthAdjust="spacingAndGlyphs">0</text>
<line x1="597" y1="365.2625" x2="1205" y2="365.2625" stroke="#8a8a8a" stroke-width="1.3"/>
<line x1="591" y1="365.2625" x2="597" y2="365.2625" stroke="#c8c8c8" stroke-width="1.3"/>
<text x="592" y="371.16249999999997" font-size="16" fill="#d8d8d8" text-anchor="end" textLength="21.8" lengthAdjust="spacingAndGlyphs">-10</text>
<line x1="597" y1="407.47499999999997" x2="1205" y2="407.47499999999997" stroke="#8a8a8a" stroke-width="1.3"/>
<line x1="591" y1="407.47499999999997" x2="597" y2="407.47499999999997" stroke="#c8c8c8" stroke-width="1.3"/>
<text x="592" y="413.37499999999994" font-size="16" fill="#d8d8d8" text-anchor="end" textLength="21.8" lengthAdjust="spacingAndGlyphs">-20</text>
<line x1="597" y1="449.6875" x2="1205" y2="449.6875" stroke="#8a8a8a" stroke-width="1.3"/>
<line x1="591" y1="449.6875" x2="597" y2="449.6875" stroke="#c8c8c8" stroke-width="1.3"/>
<text x="592" y="455.5875" font-size="16" fill="#d8d8d8" text-anchor="end" textLength="21.8" lengthAdjust="spacingAndGlyphs">-30</text>
<line x1="597" y1="491.9" x2="1205" y2="491.9" stroke="#8a8a8a" stroke-width="1.3"/>
<line x1="591" y1="491.9" x2="597" y2="491.9" stroke="#c8c8c8" stroke-width="1.3"/>
<text x="592" y="497.79999999999995" font-size="16" fill="#d8d8d8" text-anchor="end" textLength="21.8" lengthAdjust="spacingAndGlyphs">-40</text>
<rect x="597" y="154.2" width="608" height="337.7" fill="none" stroke="#9a9a9a" stroke-width="1.6"/>
<line x1="597" y1="153.89999999999998" x2="1205" y2="153.89999999999998" stroke="#9a9a9a" stroke-width="2.4"/>
<line x1="597.0" y1="491.9" x2="597.0" y2="497.9" stroke="#c8c8c8" stroke-width="1.3"/>
<text x="597.0" y="514.2" font-size="16" fill="#d8d8d8" text-anchor="middle" textLength="8.4" lengthAdjust="spacingAndGlyphs">0</text>
<line x1="657.8" y1="491.9" x2="657.8" y2="497.9" stroke="#c8c8c8" stroke-width="1.3"/>
<text x="657.8" y="514.2" font-size="16" fill="#d8d8d8" text-anchor="middle" textLength="16.7" lengthAdjust="spacingAndGlyphs">10</text>
<line x1="718.6" y1="491.9" x2="718.6" y2="497.9" stroke="#c8c8c8" stroke-width="1.3"/>
<text x="718.6" y="514.2" font-size="16" fill="#d8d8d8" text-anchor="middle" textLength="16.7" lengthAdjust="spacingAndGlyphs">20</text>
<line x1="779.4" y1="491.9" x2="779.4" y2="497.9" stroke="#c8c8c8" stroke-width="1.3"/>
<text x="779.4" y="514.2" font-size="16" fill="#d8d8d8" text-anchor="middle" textLength="16.7" lengthAdjust="spacingAndGlyphs">30</text>
<line x1="840.2" y1="491.9" x2="840.2" y2="497.9" stroke="#c8c8c8" stroke-width="1.3"/>
<text x="840.2" y="514.2" font-size="16" fill="#d8d8d8" text-anchor="middle" textLength="16.7" lengthAdjust="spacingAndGlyphs">40</text>
<line x1="901.0" y1="491.9" x2="901.0" y2="497.9" stroke="#c8c8c8" stroke-width="1.3"/>
<text x="901.0" y="514.2" font-size="16" fill="#d8d8d8" text-anchor="middle" textLength="16.7" lengthAdjust="spacingAndGlyphs">50</text>
<line x1="961.8" y1="491.9" x2="961.8" y2="497.9" stroke="#c8c8c8" stroke-width="1.3"/>
<text x="961.8" y="514.2" font-size="16" fill="#d8d8d8" text-anchor="middle" textLength="16.7" lengthAdjust="spacingAndGlyphs">60</text>
<line x1="1022.6" y1="491.9" x2="1022.6" y2="497.9" stroke="#c8c8c8" stroke-width="1.3"/>
<text x="1022.6" y="514.2" font-size="16" fill="#d8d8d8" text-anchor="middle" textLength="16.7" lengthAdjust="spacingAndGlyphs">70</text>
<line x1="1083.4" y1="491.9" x2="1083.4" y2="497.9" stroke="#c8c8c8" stroke-width="1.3"/>
<text x="1083.4" y="514.2" font-size="16" fill="#d8d8d8" text-anchor="middle" textLength="16.7" lengthAdjust="spacingAndGlyphs">80</text>
<line x1="1144.2" y1="491.9" x2="1144.2" y2="497.9" stroke="#c8c8c8" stroke-width="1.3"/>
<text x="1144.2" y="514.2" font-size="16" fill="#d8d8d8" text-anchor="middle" textLength="16.7" lengthAdjust="spacingAndGlyphs">90</text>
<line x1="1205.0" y1="491.9" x2="1205.0" y2="497.9" stroke="#c8c8c8" stroke-width="1.3"/>
<text x="1205.0" y="514.2" font-size="16" fill="#d8d8d8" text-anchor="middle" textLength="25.1" lengthAdjust="spacingAndGlyphs">100</text>
<polyline points="597.0,314.6 657.8,342.0 718.6,331.1 779.4,323.5 840.2,310.8 901.0,309.1 961.8,314.2 1022.6,315.9 1083.4,305.7 1144.2,290.1 1205.0,309.1" fill="none" stroke="#0e900e" stroke-width="3" stroke-linejoin="round"/>
<polyline points="597.0,315.9 657.8,348.8 718.6,339.9 779.4,335.7 840.2,326.0 901.0,326.8 961.8,334.0 1022.6,337.4 1083.4,329.0 1144.2,317.1 1205.0,339.5" fill="none" stroke="#ff1010" stroke-width="3" stroke-linejoin="round"/>
<polyline points="597.0,308.3 657.8,354.3 718.6,361.9 779.4,367.8 840.2,367.0 901.0,375.4 961.8,388.1 1022.6,396.5 1083.4,392.3 1144.2,377.5 1205.0,379.6" fill="none" stroke="#1010ff" stroke-width="3" stroke-linejoin="round"/>
<text x="778.5" y="558" font-size="33" fill="#f2f2f2" text-anchor="middle" textLength="201" lengthAdjust="spacingAndGlyphs">Avg CCT: 5988</text>
<text x="1221" y="558" font-size="33" fill="#f2f2f2" text-anchor="middle" textLength="292" lengthAdjust="spacingAndGlyphs">Contrast Ratio: 1752</text>
<text x="1323" y="148" font-size="16.2" fill="#e0e0e0" text-anchor="middle" textLength="88" lengthAdjust="spacingAndGlyphs">RGB Balance</text>
<rect x="1269" y="154.2" width="138.5" height="342.40000000000003" fill="#232323"/>
<line x1="1269" y1="154.2" x2="1407.5" y2="154.2" stroke="#8a8a8a" stroke-width="1.3"/>
<line x1="1263" y1="154.2" x2="1269" y2="154.2" stroke="#c8c8c8" stroke-width="1.3"/>
<text x="1262.5" y="160.1" font-size="16" fill="#d8d8d8" text-anchor="end" textLength="16.7" lengthAdjust="spacingAndGlyphs">20</text>
<line x1="1269" y1="197.0" x2="1407.5" y2="197.0" stroke="#8a8a8a" stroke-width="1.3"/>
<line x1="1263" y1="197.0" x2="1269" y2="197.0" stroke="#c8c8c8" stroke-width="1.3"/>
<text x="1262.5" y="202.9" font-size="16" fill="#d8d8d8" text-anchor="end" textLength="16.7" lengthAdjust="spacingAndGlyphs">15</text>
<line x1="1269" y1="239.8" x2="1407.5" y2="239.8" stroke="#8a8a8a" stroke-width="1.3"/>
<line x1="1263" y1="239.8" x2="1269" y2="239.8" stroke="#c8c8c8" stroke-width="1.3"/>
<text x="1262.5" y="245.70000000000002" font-size="16" fill="#d8d8d8" text-anchor="end" textLength="16.7" lengthAdjust="spacingAndGlyphs">10</text>
<line x1="1269" y1="282.6" x2="1407.5" y2="282.6" stroke="#8a8a8a" stroke-width="1.3"/>
<line x1="1263" y1="282.6" x2="1269" y2="282.6" stroke="#c8c8c8" stroke-width="1.3"/>
<text x="1262.5" y="288.5" font-size="16" fill="#d8d8d8" text-anchor="end" textLength="8.4" lengthAdjust="spacingAndGlyphs">5</text>
<line x1="1269" y1="325.4" x2="1407.5" y2="325.4" stroke="#8a8a8a" stroke-width="1.3"/>
<line x1="1263" y1="325.4" x2="1269" y2="325.4" stroke="#c8c8c8" stroke-width="1.3"/>
<text x="1262.5" y="331.29999999999995" font-size="16" fill="#d8d8d8" text-anchor="end" textLength="8.4" lengthAdjust="spacingAndGlyphs">0</text>
<line x1="1269" y1="368.20000000000005" x2="1407.5" y2="368.20000000000005" stroke="#8a8a8a" stroke-width="1.3"/>
<line x1="1263" y1="368.20000000000005" x2="1269" y2="368.20000000000005" stroke="#c8c8c8" stroke-width="1.3"/>
<text x="1262.5" y="374.1" font-size="16" fill="#d8d8d8" text-anchor="end" textLength="13.4" lengthAdjust="spacingAndGlyphs">-5</text>
<line x1="1269" y1="411.0" x2="1407.5" y2="411.0" stroke="#8a8a8a" stroke-width="1.3"/>
<line x1="1263" y1="411.0" x2="1269" y2="411.0" stroke="#c8c8c8" stroke-width="1.3"/>
<text x="1262.5" y="416.9" font-size="16" fill="#d8d8d8" text-anchor="end" textLength="21.8" lengthAdjust="spacingAndGlyphs">-10</text>
<line x1="1269" y1="453.8" x2="1407.5" y2="453.8" stroke="#8a8a8a" stroke-width="1.3"/>
<line x1="1263" y1="453.8" x2="1269" y2="453.8" stroke="#c8c8c8" stroke-width="1.3"/>
<text x="1262.5" y="459.7" font-size="16" fill="#d8d8d8" text-anchor="end" textLength="21.8" lengthAdjust="spacingAndGlyphs">-15</text>
<line x1="1269" y1="496.6" x2="1407.5" y2="496.6" stroke="#8a8a8a" stroke-width="1.3"/>
<line x1="1263" y1="496.6" x2="1269" y2="496.6" stroke="#c8c8c8" stroke-width="1.3"/>
<text x="1262.5" y="502.5" font-size="16" fill="#d8d8d8" text-anchor="end" textLength="21.8" lengthAdjust="spacingAndGlyphs">-20</text>
<rect x="1269" y="154.2" width="138.5" height="342.40000000000003" fill="none" stroke="#9a9a9a" stroke-width="1.6"/>
<line x1="1269" y1="153.89999999999998" x2="1407.5" y2="153.89999999999998" stroke="#9a9a9a" stroke-width="2.4"/>
<line x1="1269" y1="496.6" x2="1269" y2="502.6" stroke="#c8c8c8" stroke-width="1.3"/>
<line x1="1407.5" y1="496.6" x2="1407.5" y2="502.6" stroke="#c8c8c8" stroke-width="1.3"/>
<text x="1337" y="514.2" font-size="16" fill="#d8d8d8" text-anchor="middle" textLength="25.1" lengthAdjust="spacingAndGlyphs">100</text>
<rect x="1283" y="325.4" width="36" height="38.5" fill="url(#gR)" stroke="#000" stroke-width="1.2"/>
<rect x="1321" y="301.4" width="35.5" height="24.0" fill="url(#gG)" stroke="#000" stroke-width="1.2"/>
<rect x="1358.5" y="325.4" width="36" height="119.0" fill="url(#gB)" stroke="#000" stroke-width="1.2"/>
<text x="1666.5" y="148" font-size="16.2" fill="#e0e0e0" text-anchor="middle" textLength="115" lengthAdjust="spacingAndGlyphs">Gamma Log/Log</text>
<rect x="1470" y="154.2" width="420.70000000000005" height="337.3" fill="#232323"/>
<line x1="1470" y1="154.2" x2="1890.7" y2="154.2" stroke="#8a8a8a" stroke-width="1.3"/>
<line x1="1464" y1="154.2" x2="1470" y2="154.2" stroke="#c8c8c8" stroke-width="1.3"/>
<text x="1463.8" y="160.1" font-size="16" fill="#d8d8d8" text-anchor="end" textLength="20.9" lengthAdjust="spacingAndGlyphs">2.8</text>
<line x1="1470" y1="221.66" x2="1890.7" y2="221.66" stroke="#8a8a8a" stroke-width="1.3"/>
<line x1="1464" y1="221.66" x2="1470" y2="221.66" stroke="#c8c8c8" stroke-width="1.3"/>
<text x="1463.8" y="227.56" font-size="16" fill="#d8d8d8" text-anchor="end" textLength="20.9" lengthAdjust="spacingAndGlyphs">2.6</text>
<line x1="1470" y1="289.12" x2="1890.7" y2="289.12" stroke="#8a8a8a" stroke-width="1.3"/>
<line x1="1464" y1="289.12" x2="1470" y2="289.12" stroke="#c8c8c8" stroke-width="1.3"/>
<text x="1463.8" y="295.02" font-size="16" fill="#d8d8d8" text-anchor="end" textLength="20.9" lengthAdjust="spacingAndGlyphs">2.4</text>
<line x1="1470" y1="356.58000000000004" x2="1890.7" y2="356.58000000000004" stroke="#8a8a8a" stroke-width="1.3"/>
<line x1="1464" y1="356.58000000000004" x2="1470" y2="356.58000000000004" stroke="#c8c8c8" stroke-width="1.3"/>
<text x="1463.8" y="362.48" font-size="16" fill="#d8d8d8" text-anchor="end" textLength="20.9" lengthAdjust="spacingAndGlyphs">2.2</text>
<line x1="1470" y1="424.04" x2="1890.7" y2="424.04" stroke="#8a8a8a" stroke-width="1.3"/>
<line x1="1464" y1="424.04" x2="1470" y2="424.04" stroke="#c8c8c8" stroke-width="1.3"/>
<text x="1463.8" y="429.94" font-size="16" fill="#d8d8d8" text-anchor="end" textLength="8.4" lengthAdjust="spacingAndGlyphs">2</text>
<line x1="1470" y1="491.5" x2="1890.7" y2="491.5" stroke="#8a8a8a" stroke-width="1.3"/>
<line x1="1464" y1="491.5" x2="1470" y2="491.5" stroke="#c8c8c8" stroke-width="1.3"/>
<text x="1463.8" y="497.4" font-size="16" fill="#d8d8d8" text-anchor="end" textLength="20.9" lengthAdjust="spacingAndGlyphs">1.8</text>
<rect x="1470" y="154.2" width="420.70000000000005" height="337.3" fill="none" stroke="#9a9a9a" stroke-width="1.6"/>
<line x1="1470" y1="153.89999999999998" x2="1890.7" y2="153.89999999999998" stroke="#9a9a9a" stroke-width="2.4"/>
<line x1="1470.0" y1="491.5" x2="1470.0" y2="497.5" stroke="#c8c8c8" stroke-width="1.3"/>
<text x="1470.0" y="514.2" font-size="16" fill="#d8d8d8" text-anchor="middle" textLength="8.4" lengthAdjust="spacingAndGlyphs">0</text>
<line x1="1554.14" y1="491.5" x2="1554.14" y2="497.5" stroke="#c8c8c8" stroke-width="1.3"/>
<text x="1554.14" y="514.2" font-size="16" fill="#d8d8d8" text-anchor="middle" textLength="16.7" lengthAdjust="spacingAndGlyphs">20</text>
<line x1="1638.28" y1="491.5" x2="1638.28" y2="497.5" stroke="#c8c8c8" stroke-width="1.3"/>
<text x="1638.28" y="514.2" font-size="16" fill="#d8d8d8" text-anchor="middle" textLength="16.7" lengthAdjust="spacingAndGlyphs">40</text>
<line x1="1722.42" y1="491.5" x2="1722.42" y2="497.5" stroke="#c8c8c8" stroke-width="1.3"/>
<text x="1722.42" y="514.2" font-size="16" fill="#d8d8d8" text-anchor="middle" textLength="16.7" lengthAdjust="spacingAndGlyphs">60</text>
<line x1="1806.56" y1="491.5" x2="1806.56" y2="497.5" stroke="#c8c8c8" stroke-width="1.3"/>
<text x="1806.56" y="514.2" font-size="16" fill="#d8d8d8" text-anchor="middle" textLength="16.7" lengthAdjust="spacingAndGlyphs">80</text>
<line x1="1890.7" y1="491.5" x2="1890.7" y2="497.5" stroke="#c8c8c8" stroke-width="1.3"/>
<text x="1890.7" y="514.2" font-size="16" fill="#d8d8d8" text-anchor="middle" textLength="25.1" lengthAdjust="spacingAndGlyphs">100</text>
<clipPath id="clipG"><rect x="1470" y="154.2" width="420.70000000000005" height="337.3"/></clipPath>
<polyline clip-path="url(#clipG)" points="1470.0,667.6 1512.1,388.7 1554.1,365.1 1596.2,355.0 1638.3,360.0 1680.3,353.6 1722.4,337.2 1764.5,325.9 1806.6,350.7 1848.6,466.9 1890.7,331.3" fill="none" stroke="#8c8c8c" stroke-width="2.6" stroke-linejoin="round"/>
<polyline clip-path="url(#clipG)" points="1482.6,512.4 1482.7,511.8 1482.9,510.7 1483.1,509.2 1483.4,507.3 1483.7,505.3 1484.1,503.0 1484.5,500.6 1485.0,498.0 1485.5,495.3 1486.0,492.6 1486.6,489.7 1487.2,486.9 1487.8,484.0 1488.5,481.1 1489.1,478.2 1489.8,475.3 1490.6,472.4 1491.3,469.6 1492.1,466.7 1492.9,463.9 1493.8,461.2 1494.6,458.5 1495.5,455.8 1496.4,453.2 1497.4,450.6 1498.3,448.0 1499.3,445.6 1500.3,443.1 1501.3,440.8 1502.4,438.4 1503.4,436.2 1504.5,433.9 1505.6,431.8 1506.7,429.6 1507.9,427.6 1509.1,425.5 1510.2,423.6 1511.4,421.6 1512.7,419.8 1513.9,417.9 1515.2,416.1 1516.5,414.4 1517.8,412.7 1519.1,411.0 1520.4,409.3 1521.8,407.8 1523.1,406.2 1524.5,404.7 1525.9,403.2 1527.3,401.7 1528.8,400.3 1530.2,399.0 1531.7,397.6 1533.2,396.3 1534.7,395.0 1536.2,393.7 1537.8,392.5 1539.3,391.3 1540.9,390.1 1542.5,389.0 1544.1,387.8 1545.7,386.7 1547.3,385.7 1549.0,384.6 1550.7,383.6 1552.3,382.6 1554.0,381.6 1555.8,380.6 1557.5,379.7 1559.2,378.7 1561.0,377.8 1562.8,377.0 1564.6,376.1 1566.4,375.2 1568.2,374.4 1570.0,373.6 1571.9,372.8 1573.7,372.0 1575.6,371.2 1577.5,370.5 1579.4,369.7 1581.3,369.0 1583.2,368.3 1585.2,367.6 1587.1,366.9 1589.1,366.2 1591.1,365.5 1593.1,364.9 1595.1,364.2 1597.2,363.6 1599.2,363.0 1601.3,362.4 1603.3,361.8 1605.4,361.2 1607.5,360.6 1609.6,360.1 1611.7,359.5 1613.9,359.0 1616.0,358.4 1618.2,357.9 1620.4,357.4 1622.5,356.9 1624.7,356.4 1627.0,355.9 1629.2,355.4 1631.4,354.9 1633.7,354.5 1635.9,354.0 1638.2,353.5 1640.5,353.1 1642.8,352.7 1645.1,352.2 1647.5,351.8 1649.8,351.4 1652.2,351.0 1654.5,350.6 1656.9,350.1 1659.3,349.8 1661.7,349.4 1664.1,349.0 1666.5,348.6 1669.0,348.2 1671.4,347.9 1673.9,347.5 1676.3,347.1 1678.8,346.8 1681.3,346.4 1683.8,346.1 1686.4,345.8 1688.9,345.4 1691.4,345.1 1694.0,344.8 1696.6,344.4 1699.1,344.1 1701.7,343.8 1704.3,343.5 1706.9,343.2 1709.6,342.9 1712.2,342.6 1714.9,342.3 1717.5,342.0 1720.2,341.7 1722.9,341.5 1725.6,341.2 1728.3,340.9 1731.0,340.6 1733.7,340.4 1736.5,340.1 1739.2,339.9 1742.0,339.6 1744.7,339.3 1747.5,339.1 1750.3,338.8 1753.1,338.6 1755.9,338.4 1758.8,338.1 1761.6,337.9 1764.4,337.6 1767.3,337.4 1770.2,337.2 1773.1,337.0 1776.0,336.7 1778.9,336.5 1781.8,336.3 1784.7,336.1 1787.6,335.9 1790.6,335.7 1793.5,335.5 1796.5,335.2 1799.5,335.0 1802.5,334.8 1805.5,334.6 1808.5,334.4 1811.5,334.2 1814.5,334.1 1817.5,333.9 1820.6,333.7 1823.7,333.5 1826.7,333.3 1829.8,333.1 1832.9,332.9 1836.0,332.8 1839.1,332.6 1842.2,332.4 1845.4,332.2 1848.5,332.1 1851.7,331.9 1854.8,331.7 1858.0,331.5 1861.2,331.4 1864.4,331.2 1867.6,331.1 1870.8,330.9 1874.0,330.7 1877.2,330.6 1880.5,330.4 1883.7,330.3 1887.0,330.1 1890.3,330.0" fill="none" stroke="#f0f000" stroke-width="3" stroke-linejoin="round"/>
<text x="1666.5" y="558" font-size="33" fill="#f2f2f2" text-anchor="middle" textLength="334" lengthAdjust="spacingAndGlyphs">Average Gamma: 2.169</text>
<rect x="150" y="579" width="1770" height="139" fill="#000000"/>
<rect x="251" y="579" width="1" height="139" fill="#0c0c0c"/>
<rect x="1904" y="579" width="1" height="139" fill="#0c0c0c"/>
<rect x="275" y="585" width="128" height="109" fill="#e6e6e6"/>
<rect x="277" y="587" width="124" height="53" fill="#05070a"/>
<rect x="277" y="640" width="124" height="52" fill="#030303"/>
<text x="339" y="709.5" font-size="14" fill="#f0f0f0" text-anchor="middle" textLength="7.4" lengthAdjust="spacingAndGlyphs">0</text>
<rect x="424" y="585" width="128" height="109" fill="#e6e6e6"/>
<rect x="426" y="587" width="124" height="53" fill="#1b1b19"/>
<rect x="426" y="640" width="124" height="52" fill="#1e1e1e"/>
<text x="488" y="709.5" font-size="14" fill="#f0f0f0" text-anchor="middle" textLength="14.8" lengthAdjust="spacingAndGlyphs">10</text>
<rect x="573" y="585" width="128" height="109" fill="#e6e6e6"/>
<rect x="575" y="587" width="124" height="53" fill="#32322c"/>
<rect x="575" y="640" width="124" height="52" fill="#363636"/>
<text x="637" y="709.5" font-size="14" fill="#f0f0f0" text-anchor="middle" textLength="14.8" lengthAdjust="spacingAndGlyphs">20</text>
<rect x="722" y="585" width="128" height="109" fill="#e6e6e6"/>
<rect x="724" y="587" width="124" height="53" fill="#4a4a40"/>
<rect x="724" y="640" width="124" height="52" fill="#505050"/>
<text x="786" y="709.5" font-size="14" fill="#f0f0f0" text-anchor="middle" textLength="14.8" lengthAdjust="spacingAndGlyphs">30</text>
<rect x="871" y="585" width="128" height="109" fill="#e6e6e6"/>
<rect x="873" y="587" width="124" height="53" fill="#666a5e"/>
<rect x="873" y="640" width="124" height="52" fill="#6a6a6a"/>
<text x="935" y="709.5" font-size="14" fill="#f0f0f0" text-anchor="middle" textLength="14.8" lengthAdjust="spacingAndGlyphs">40</text>
<rect x="1020" y="585" width="128" height="109" fill="#e6e6e6"/>
<rect x="1022" y="587" width="124" height="53" fill="#7e8273"/>
<rect x="1022" y="640" width="124" height="52" fill="#808080"/>
<text x="1084" y="709.5" font-size="14" fill="#f0f0f0" text-anchor="middle" textLength="14.8" lengthAdjust="spacingAndGlyphs">50</text>
<rect x="1169" y="585" width="128" height="109" fill="#e6e6e6"/>
<rect x="1171" y="587" width="124" height="53" fill="#969a8a"/>
<rect x="1171" y="640" width="124" height="52" fill="#9a9a9a"/>
<text x="1233" y="709.5" font-size="14" fill="#f0f0f0" text-anchor="middle" textLength="14.8" lengthAdjust="spacingAndGlyphs">60</text>
<rect x="1318" y="585" width="128" height="109" fill="#e6e6e6"/>
<rect x="1320" y="587" width="124" height="53" fill="#aeb2a0"/>
<rect x="1320" y="640" width="124" height="52" fill="#b3b3b3"/>
<text x="1382" y="709.5" font-size="14" fill="#f0f0f0" text-anchor="middle" textLength="14.8" lengthAdjust="spacingAndGlyphs">70</text>
<rect x="1467" y="585" width="128" height="109" fill="#e6e6e6"/>
<rect x="1469" y="587" width="124" height="53" fill="#cbcfba"/>
<rect x="1469" y="640" width="124" height="52" fill="#cdcdcd"/>
<text x="1531" y="709.5" font-size="14" fill="#f0f0f0" text-anchor="middle" textLength="14.8" lengthAdjust="spacingAndGlyphs">80</text>
<rect x="1616" y="585" width="128" height="109" fill="#e6e6e6"/>
<rect x="1618" y="587" width="124" height="53" fill="#e6ead6"/>
<rect x="1618" y="640" width="124" height="52" fill="#e6e6e6"/>
<text x="1680" y="709.5" font-size="14" fill="#f0f0f0" text-anchor="middle" textLength="14.8" lengthAdjust="spacingAndGlyphs">90</text>
<rect x="1765" y="585" width="128" height="109" fill="#e6e6e6"/>
<rect x="1767" y="587" width="124" height="53" fill="#f8fff0"/>
<rect x="1767" y="640" width="124" height="52" fill="#fafafa"/>
<text x="1829" y="709.5" font-size="14" fill="#f0f0f0" text-anchor="middle" textLength="22.200000000000003" lengthAdjust="spacingAndGlyphs">100</text>
<text transform="translate(266.5,609.5) rotate(-90)" font-size="14" fill="#f0f0f0" text-anchor="middle" textLength="37.5" lengthAdjust="spacingAndGlyphs">Actual</text>
<text transform="translate(266.5,670.2) rotate(-90)" font-size="14" fill="#f0f0f0" text-anchor="middle" textLength="36.5" lengthAdjust="spacingAndGlyphs">Target</text>
<text x="172.5" y="788.7" font-size="32.5" fill="#f2f2f2" textLength="233" lengthAdjust="spacingAndGlyphs">Current Reading</text>
<text x="172.5" y="834.1" font-size="26.5" fill="#f2f2f2" textLength="108" lengthAdjust="spacingAndGlyphs">x: 0.3175</text>
<text x="172.5" y="870" font-size="26.5" fill="#f2f2f2" textLength="118" lengthAdjust="spacingAndGlyphs">u': 0.1954</text>
<text x="172.5" y="906" font-size="26.5" fill="#f2f2f2" textLength="198" lengthAdjust="spacingAndGlyphs">cd/m²: 335.3423</text>
<text x="172.5" y="942.3" font-size="26.5" fill="#f2f2f2" textLength="163.5" lengthAdjust="spacingAndGlyphs">ΔE 2000: 8.32</text>
<text x="331.5" y="834.1" font-size="26.5" fill="#f2f2f2" textLength="109" lengthAdjust="spacingAndGlyphs">y: 0.3444</text>
<text x="331.5" y="870" font-size="26.5" fill="#f2f2f2" textLength="100.5" lengthAdjust="spacingAndGlyphs">v': 0.477</text>
<text x="652.5" y="753" font-size="15.6" fill="#e0e0e0" text-anchor="middle" textLength="80" lengthAdjust="spacingAndGlyphs">CIE 1931 xy</text>
<rect x="536.6" y="758.4" width="267.69999999999993" height="4.6" fill="url(#cr0)"/>
<rect x="536.6" y="762.4" width="267.69999999999993" height="4.6" fill="url(#cr1)"/>
<rect x="536.6" y="766.41" width="267.69999999999993" height="4.6" fill="url(#cr2)"/>
<rect x="536.6" y="770.41" width="267.69999999999993" height="4.6" fill="url(#cr3)"/>
<rect x="536.6" y="774.42" width="267.69999999999993" height="4.6" fill="url(#cr4)"/>
<rect x="536.6" y="778.42" width="267.69999999999993" height="4.6" fill="url(#cr5)"/>
<rect x="536.6" y="782.43" width="267.69999999999993" height="4.6" fill="url(#cr6)"/>
<rect x="536.6" y="786.43" width="267.69999999999993" height="4.6" fill="url(#cr7)"/>
<rect x="536.6" y="790.44" width="267.69999999999993" height="4.6" fill="url(#cr8)"/>
<rect x="536.6" y="794.44" width="267.69999999999993" height="4.6" fill="url(#cr9)"/>
<rect x="536.6" y="798.45" width="267.69999999999993" height="4.6" fill="url(#cr10)"/>
<rect x="536.6" y="802.45" width="267.69999999999993" height="4.6" fill="url(#cr11)"/>
<rect x="536.6" y="806.45" width="267.69999999999993" height="4.6" fill="url(#cr12)"/>
<rect x="536.6" y="810.46" width="267.69999999999993" height="4.6" fill="url(#cr13)"/>
<rect x="536.6" y="814.46" width="267.69999999999993" height="4.6" fill="url(#cr14)"/>
<rect x="536.6" y="818.47" width="267.69999999999993" height="4.6" fill="url(#cr15)"/>
<rect x="536.6" y="822.47" width="267.69999999999993" height="4.6" fill="url(#cr16)"/>
<rect x="536.6" y="826.48" width="267.69999999999993" height="4.6" fill="url(#cr17)"/>
<rect x="536.6" y="830.48" width="267.69999999999993" height="4.6" fill="url(#cr18)"/>
<rect x="536.6" y="834.49" width="267.69999999999993" height="4.6" fill="url(#cr19)"/>
<rect x="536.6" y="838.49" width="267.69999999999993" height="4.6" fill="url(#cr20)"/>
<rect x="536.6" y="842.5" width="267.69999999999993" height="4.6" fill="url(#cr21)"/>
<rect x="536.6" y="846.5" width="267.69999999999993" height="4.6" fill="url(#cr22)"/>
<rect x="536.6" y="850.5" width="267.69999999999993" height="4.6" fill="url(#cr23)"/>
<rect x="536.6" y="854.51" width="267.69999999999993" height="4.6" fill="url(#cr24)"/>
<rect x="536.6" y="858.51" width="267.69999999999993" height="4.6" fill="url(#cr25)"/>
<rect x="536.6" y="862.52" width="267.69999999999993" height="4.6" fill="url(#cr26)"/>
<rect x="536.6" y="866.52" width="267.69999999999993" height="4.6" fill="url(#cr27)"/>
<rect x="536.6" y="870.53" width="267.69999999999993" height="4.6" fill="url(#cr28)"/>
<rect x="536.6" y="874.53" width="267.69999999999993" height="4.6" fill="url(#cr29)"/>
<rect x="536.6" y="878.54" width="267.69999999999993" height="4.6" fill="url(#cr30)"/>
<rect x="536.6" y="882.54" width="267.69999999999993" height="4.6" fill="url(#cr31)"/>
<rect x="536.6" y="886.55" width="267.69999999999993" height="4.6" fill="url(#cr32)"/>
<rect x="536.6" y="890.55" width="267.69999999999993" height="4.6" fill="url(#cr33)"/>
<rect x="536.6" y="894.55" width="267.69999999999993" height="4.6" fill="url(#cr34)"/>
<rect x="536.6" y="898.56" width="267.69999999999993" height="4.6" fill="url(#cr35)"/>
<rect x="536.6" y="902.56" width="267.69999999999993" height="4.6" fill="url(#cr36)"/>
<rect x="536.6" y="906.57" width="267.69999999999993" height="4.6" fill="url(#cr37)"/>
<rect x="536.6" y="910.57" width="267.69999999999993" height="4.6" fill="url(#cr38)"/>
<rect x="536.6" y="914.58" width="267.69999999999993" height="4.6" fill="url(#cr39)"/>
<rect x="536.6" y="918.58" width="267.69999999999993" height="4.6" fill="url(#cr40)"/>
<rect x="536.6" y="922.59" width="267.69999999999993" height="4.6" fill="url(#cr41)"/>
<rect x="536.6" y="926.59" width="267.69999999999993" height="4.6" fill="url(#cr42)"/>
<rect x="536.6" y="930.6" width="267.69999999999993" height="4.6" fill="url(#cr43)"/>
<rect x="536.6" y="758.4" width="267.69999999999993" height="176.20000000000005" fill="none" stroke="#9a9a9a" stroke-width="1.5"/>
<path clip-path="url(#clipC)" d="M570.5 934.6 Q690 855 805 786" fill="none" stroke="#000" stroke-width="2.6"/>
<rect x="663" y="838" width="14" height="14" fill="#ffffff" stroke="#000" stroke-width="1.6"/>
<g clip-path="url(#clipC)">
<circle cx="687.2" cy="796.6" r="4.6" fill="#191919" stroke="#111" stroke-width="1.1"/>
<circle cx="717.6" cy="768.6" r="4.6" fill="#333333" stroke="#111" stroke-width="1.1"/>
<circle cx="721.9" cy="762.9" r="4.6" fill="#4c4c4c" stroke="#111" stroke-width="1.1"/>
<circle cx="724.1" cy="761.2" r="4.6" fill="#666666" stroke="#111" stroke-width="1.1"/>
<circle cx="724.1" cy="761.5" r="4.6" fill="#7f7f7f" stroke="#111" stroke-width="1.1"/>
<circle cx="723.5" cy="762.2" r="4.6" fill="#999999" stroke="#111" stroke-width="1.1"/>
<circle cx="723.0" cy="764.0" r="4.6" fill="#b2b2b2" stroke="#111" stroke-width="1.1"/>
<circle cx="720.3" cy="767.2" r="4.6" fill="#cccccc" stroke="#111" stroke-width="1.1"/>
<circle cx="713.4" cy="774.6" r="4.6" fill="#e5e5e5" stroke="#111" stroke-width="1.1"/>
<circle cx="695.8" cy="792.3" r="4.6" fill="#ffffff" stroke="#111" stroke-width="1.1"/>
</g>
<line x1="531" y1="809.7" x2="536.6" y2="809.7" stroke="#c8c8c8" stroke-width="1.2"/>
<text x="530.5" y="815.3000000000001" font-size="16" fill="#d8d8d8" text-anchor="end" textLength="29.3" lengthAdjust="spacingAndGlyphs">0.34</text>
<line x1="531" y1="880.5" x2="536.6" y2="880.5" stroke="#c8c8c8" stroke-width="1.2"/>
<text x="530.5" y="886.1" font-size="16" fill="#d8d8d8" text-anchor="end" textLength="29.3" lengthAdjust="spacingAndGlyphs">0.32</text>
<line x1="548.9" y1="934.6" x2="548.9" y2="939.6" stroke="#c8c8c8" stroke-width="1.2"/>
<text x="548.9" y="957.5" font-size="16" fill="#d8d8d8" text-anchor="middle" textLength="29.3" lengthAdjust="spacingAndGlyphs">0.29</text>
<line x1="602.27" y1="934.6" x2="602.27" y2="939.6" stroke="#c8c8c8" stroke-width="1.2"/>
<text x="602.27" y="957.5" font-size="16" fill="#d8d8d8" text-anchor="middle" textLength="20.9" lengthAdjust="spacingAndGlyphs">0.3</text>
<line x1="655.64" y1="934.6" x2="655.64" y2="939.6" stroke="#c8c8c8" stroke-width="1.2"/>
<text x="655.64" y="957.5" font-size="16" fill="#d8d8d8" text-anchor="middle" textLength="29.3" lengthAdjust="spacingAndGlyphs">0.31</text>
<line x1="709.01" y1="934.6" x2="709.01" y2="939.6" stroke="#c8c8c8" stroke-width="1.2"/>
<text x="709.01" y="957.5" font-size="16" fill="#d8d8d8" text-anchor="middle" textLength="29.3" lengthAdjust="spacingAndGlyphs">0.32</text>
<line x1="762.38" y1="934.6" x2="762.38" y2="939.6" stroke="#c8c8c8" stroke-width="1.2"/>
<text x="762.38" y="957.5" font-size="16" fill="#d8d8d8" text-anchor="middle" textLength="29.3" lengthAdjust="spacingAndGlyphs">0.33</text>
<rect x="815.5" y="728.5" width="1095.5" height="243" fill="none" stroke="#d8d8d8" stroke-width="1.4" stroke-dasharray="2 2"/>
<rect x="816.6" y="729.3" width="10.7" height="25.2" fill="#000000"/>
<rect x="827.3" y="729.3" width="897.3" height="12" fill="#2e2e2e"/>
<rect x="827.3" y="741.3" width="897.3" height="13.2" fill="#141414"/>
<text x="940.4" y="746.8" font-size="13.4" fill="#f0f0f0" textLength="7.0" lengthAdjust="spacingAndGlyphs">0</text>
<text x="1019.1999999999999" y="746.8" font-size="13.4" fill="#f0f0f0" textLength="14.0" lengthAdjust="spacingAndGlyphs">10</text>
<text x="1090.2" y="746.8" font-size="13.4" fill="#f0f0f0" textLength="14.0" lengthAdjust="spacingAndGlyphs">20</text>
<text x="1161.0" y="746.8" font-size="13.4" fill="#f0f0f0" textLength="14.0" lengthAdjust="spacingAndGlyphs">30</text>
<text x="1231.8000000000002" y="746.8" font-size="13.4" fill="#f0f0f0" textLength="14.0" lengthAdjust="spacingAndGlyphs">40</text>
<text x="1302.6000000000001" y="746.8" font-size="13.4" fill="#f0f0f0" textLength="14.0" lengthAdjust="spacingAndGlyphs">50</text>
<text x="1373.7" y="746.8" font-size="13.4" fill="#f0f0f0" textLength="14.0" lengthAdjust="spacingAndGlyphs">60</text>
<text x="1444.2" y="746.8" font-size="13.4" fill="#f0f0f0" textLength="14.0" lengthAdjust="spacingAndGlyphs">70</text>
<text x="1515.1000000000001" y="746.8" font-size="13.4" fill="#f0f0f0" textLength="14.0" lengthAdjust="spacingAndGlyphs">80</text>
<text x="1585.8000000000002" y="746.8" font-size="13.4" fill="#f0f0f0" textLength="14.0" lengthAdjust="spacingAndGlyphs">90</text>
<text x="1656.9" y="746.8" font-size="13.4" fill="#f0f0f0" textLength="21.0" lengthAdjust="spacingAndGlyphs">100</text>
<rect x="816.6" y="754.5" width="10.7" height="24.675" fill="#242424"/>
<rect x="827.3" y="754.5" width="897.3" height="24.675" fill="#424242"/>
<text x="830.8" y="773.0" font-size="15.8" fill="#f0f0f0" textLength="46.8" lengthAdjust="spacingAndGlyphs">x: CIE31</text>
<text x="940.2" y="773.0" font-size="15.8" fill="#f0f0f0" textLength="40.6" lengthAdjust="spacingAndGlyphs">0.2492</text>
<text x="1019.0" y="773.0" font-size="15.8" fill="#f0f0f0" textLength="40.6" lengthAdjust="spacingAndGlyphs">0.3159</text>
<text x="1090.0" y="773.0" font-size="15.8" fill="#f0f0f0" textLength="40.6" lengthAdjust="spacingAndGlyphs">0.3216</text>
<text x="1160.8" y="773.0" font-size="15.8" fill="#f0f0f0" textLength="40.6" lengthAdjust="spacingAndGlyphs">0.3224</text>
<text x="1231.6000000000001" y="773.0" font-size="15.8" fill="#f0f0f0" textLength="40.6" lengthAdjust="spacingAndGlyphs">0.3228</text>
<text x="1302.4" y="773.0" font-size="15.8" fill="#f0f0f0" textLength="40.6" lengthAdjust="spacingAndGlyphs">0.3228</text>
<text x="1373.5" y="773.0" font-size="15.8" fill="#f0f0f0" textLength="40.6" lengthAdjust="spacingAndGlyphs">0.3227</text>
<text x="1444.0" y="773.0" font-size="15.8" fill="#f0f0f0" textLength="40.6" lengthAdjust="spacingAndGlyphs">0.3226</text>
<text x="1514.9" y="773.0" font-size="15.8" fill="#f0f0f0" textLength="40.6" lengthAdjust="spacingAndGlyphs">0.3221</text>
<text x="1585.6000000000001" y="773.0" font-size="15.8" fill="#f0f0f0" textLength="40.6" lengthAdjust="spacingAndGlyphs">0.3208</text>
<text x="1656.7" y="773.0" font-size="15.8" fill="#f0f0f0" textLength="40.6" lengthAdjust="spacingAndGlyphs">0.3175</text>
<rect x="816.6" y="779.175" width="10.7" height="24.675" fill="#2c2c2c"/>
<rect x="827.3" y="779.175" width="897.3" height="24.675" fill="#7b7b7b"/>
<text x="830.8" y="797.675" font-size="15.8" fill="#f0f0f0" textLength="47.1" lengthAdjust="spacingAndGlyphs">y: CIE31</text>
<text x="940.2" y="797.675" font-size="15.8" fill="#f0f0f0" textLength="40.6" lengthAdjust="spacingAndGlyphs">0.2394</text>
<text x="1019.0" y="797.675" font-size="15.8" fill="#f0f0f0" textLength="40.6" lengthAdjust="spacingAndGlyphs">0.3432</text>
<text x="1090.0" y="797.675" font-size="15.8" fill="#f0f0f0" textLength="40.6" lengthAdjust="spacingAndGlyphs">0.3511</text>
<text x="1160.8" y="797.675" font-size="15.8" fill="#f0f0f0" textLength="40.6" lengthAdjust="spacingAndGlyphs">0.3527</text>
<text x="1231.6000000000001" y="797.675" font-size="15.8" fill="#f0f0f0" textLength="40.6" lengthAdjust="spacingAndGlyphs">0.3532</text>
<text x="1302.4" y="797.675" font-size="15.8" fill="#f0f0f0" textLength="40.6" lengthAdjust="spacingAndGlyphs">0.3531</text>
<text x="1373.5" y="797.675" font-size="15.8" fill="#f0f0f0" textLength="40.6" lengthAdjust="spacingAndGlyphs">0.3529</text>
<text x="1444.0" y="797.675" font-size="15.8" fill="#f0f0f0" textLength="40.6" lengthAdjust="spacingAndGlyphs">0.3524</text>
<text x="1514.9" y="797.675" font-size="15.8" fill="#f0f0f0" textLength="40.6" lengthAdjust="spacingAndGlyphs">0.3515</text>
<text x="1585.6000000000001" y="797.675" font-size="15.8" fill="#f0f0f0" textLength="40.6" lengthAdjust="spacingAndGlyphs">0.3494</text>
<text x="1656.7" y="797.675" font-size="15.8" fill="#f0f0f0" textLength="40.6" lengthAdjust="spacingAndGlyphs">0.3444</text>
<rect x="816.6" y="803.85" width="10.7" height="24.675" fill="#242424"/>
<rect x="827.3" y="803.85" width="897.3" height="24.675" fill="#424242"/>
<text x="830.8" y="822.35" font-size="15.8" fill="#f0f0f0" textLength="7.1" lengthAdjust="spacingAndGlyphs">Y</text>
<text x="940.2" y="822.35" font-size="15.8" fill="#f0f0f0" textLength="40.6" lengthAdjust="spacingAndGlyphs">0.1914</text>
<text x="1019.0" y="822.35" font-size="15.8" fill="#f0f0f0" textLength="40.6" lengthAdjust="spacingAndGlyphs">2.7442</text>
<text x="1090.0" y="822.35" font-size="15.8" fill="#f0f0f0" textLength="48.0" lengthAdjust="spacingAndGlyphs">10.1239</text>
<text x="1160.8" y="822.35" font-size="15.8" fill="#f0f0f0" textLength="48.0" lengthAdjust="spacingAndGlyphs">23.2531</text>
<text x="1231.6000000000001" y="822.35" font-size="15.8" fill="#f0f0f0" textLength="48.0" lengthAdjust="spacingAndGlyphs">45.0803</text>
<text x="1302.4" y="822.35" font-size="15.8" fill="#f0f0f0" textLength="48.0" lengthAdjust="spacingAndGlyphs">73.1651</text>
<rect x="1370" y="804.6" width="69.8" height="22.9" fill="#f4f4f4"/>
<text x="1373.5" y="822.35" font-size="15.8" fill="#202020" textLength="55.4" lengthAdjust="spacingAndGlyphs">105.8477</text>
<text x="1444.0" y="822.35" font-size="15.8" fill="#f0f0f0" textLength="55.4" lengthAdjust="spacingAndGlyphs">147.1713</text>
<text x="1514.9" y="822.35" font-size="15.8" fill="#f0f0f0" textLength="55.4" lengthAdjust="spacingAndGlyphs">204.4565</text>
<text x="1585.6000000000001" y="822.35" font-size="15.8" fill="#f0f0f0" textLength="55.4" lengthAdjust="spacingAndGlyphs">276.4140</text>
<text x="1656.7" y="822.35" font-size="15.8" fill="#f0f0f0" textLength="55.4" lengthAdjust="spacingAndGlyphs">335.3423</text>
<rect x="816.6" y="828.525" width="10.7" height="24.675" fill="#2c2c2c"/>
<rect x="827.3" y="828.525" width="897.3" height="24.675" fill="#7b7b7b"/>
<text x="830.8" y="847.025" font-size="15.8" fill="#f0f0f0" textLength="48.5" lengthAdjust="spacingAndGlyphs">Target Y</text>
<text x="940.2" y="847.025" font-size="15.8" fill="#f0f0f0" textLength="40.6" lengthAdjust="spacingAndGlyphs">0.0000</text>
<text x="1019.0" y="847.025" font-size="15.8" fill="#f0f0f0" textLength="40.6" lengthAdjust="spacingAndGlyphs">3.4640</text>
<text x="1090.0" y="847.025" font-size="15.8" fill="#f0f0f0" textLength="48.0" lengthAdjust="spacingAndGlyphs">11.1014</text>
<text x="1160.8" y="847.025" font-size="15.8" fill="#f0f0f0" textLength="48.0" lengthAdjust="spacingAndGlyphs">24.2358</text>
<text x="1231.6000000000001" y="847.025" font-size="15.8" fill="#f0f0f0" textLength="48.0" lengthAdjust="spacingAndGlyphs">44.5564</text>
<text x="1302.4" y="847.025" font-size="15.8" fill="#f0f0f0" textLength="48.0" lengthAdjust="spacingAndGlyphs">72.3872</text>
<text x="1373.5" y="847.025" font-size="15.8" fill="#f0f0f0" textLength="55.4" lengthAdjust="spacingAndGlyphs">106.8222</text>
<text x="1444.0" y="847.025" font-size="15.8" fill="#f0f0f0" textLength="55.4" lengthAdjust="spacingAndGlyphs">149.2948</text>
<text x="1514.9" y="847.025" font-size="15.8" fill="#f0f0f0" textLength="55.4" lengthAdjust="spacingAndGlyphs">202.4889</text>
<text x="1585.6000000000001" y="847.025" font-size="15.8" fill="#f0f0f0" textLength="55.4" lengthAdjust="spacingAndGlyphs">265.3557</text>
<text x="1656.7" y="847.025" font-size="15.8" fill="#f0f0f0" textLength="55.4" lengthAdjust="spacingAndGlyphs">335.3423</text>
<rect x="816.6" y="853.2" width="10.7" height="24.675" fill="#242424"/>
<rect x="827.3" y="853.2" width="897.3" height="24.675" fill="#424242"/>
<text x="830.8" y="871.7" font-size="15.8" fill="#f0f0f0" textLength="96.7" lengthAdjust="spacingAndGlyphs">Gamma Log/Log</text>
<text x="940.2" y="871.7" font-size="15.8" fill="#f0f0f0" textLength="40.6" lengthAdjust="spacingAndGlyphs">1.2778</text>
<text x="1019.0" y="871.7" font-size="15.8" fill="#f0f0f0" textLength="40.6" lengthAdjust="spacingAndGlyphs">2.1048</text>
<text x="1090.0" y="871.7" font-size="15.8" fill="#f0f0f0" textLength="40.6" lengthAdjust="spacingAndGlyphs">2.1748</text>
<text x="1160.8" y="871.7" font-size="15.8" fill="#f0f0f0" textLength="40.6" lengthAdjust="spacingAndGlyphs">2.2046</text>
<text x="1231.6000000000001" y="871.7" font-size="15.8" fill="#f0f0f0" textLength="40.6" lengthAdjust="spacingAndGlyphs">2.1900</text>
<text x="1302.4" y="871.7" font-size="15.8" fill="#f0f0f0" textLength="40.6" lengthAdjust="spacingAndGlyphs">2.2089</text>
<text x="1373.5" y="871.7" font-size="15.8" fill="#f0f0f0" textLength="40.6" lengthAdjust="spacingAndGlyphs">2.2574</text>
<text x="1444.0" y="871.7" font-size="15.8" fill="#f0f0f0" textLength="40.6" lengthAdjust="spacingAndGlyphs">2.2910</text>
<text x="1514.9" y="871.7" font-size="15.8" fill="#f0f0f0" textLength="40.6" lengthAdjust="spacingAndGlyphs">2.2174</text>
<text x="1585.6000000000001" y="871.7" font-size="15.8" fill="#f0f0f0" textLength="40.6" lengthAdjust="spacingAndGlyphs">1.8729</text>
<text x="1656.7" y="871.7" font-size="15.8" fill="#f0f0f0" textLength="40.6" lengthAdjust="spacingAndGlyphs">2.2749</text>
<rect x="816.6" y="877.875" width="10.7" height="24.675" fill="#2c2c2c"/>
<rect x="827.3" y="877.875" width="897.3" height="24.675" fill="#7b7b7b"/>
<text x="830.8" y="896.375" font-size="15.8" fill="#f0f0f0" textLength="22.6" lengthAdjust="spacingAndGlyphs">CCT</text>
<text x="940.2" y="896.375" font-size="15.8" fill="#f0f0f0" textLength="70.1" lengthAdjust="spacingAndGlyphs">26232.0000</text>
<text x="1019.0" y="896.375" font-size="15.8" fill="#f0f0f0" textLength="62.8" lengthAdjust="spacingAndGlyphs">6254.0000</text>
<text x="1090.0" y="896.375" font-size="15.8" fill="#f0f0f0" textLength="62.8" lengthAdjust="spacingAndGlyphs">5961.0000</text>
<text x="1160.8" y="896.375" font-size="15.8" fill="#f0f0f0" textLength="62.8" lengthAdjust="spacingAndGlyphs">5921.0000</text>
<text x="1231.6000000000001" y="896.375" font-size="15.8" fill="#f0f0f0" textLength="62.8" lengthAdjust="spacingAndGlyphs">5904.0000</text>
<text x="1302.4" y="896.375" font-size="15.8" fill="#f0f0f0" textLength="62.8" lengthAdjust="spacingAndGlyphs">5903.0000</text>
<text x="1373.5" y="896.375" font-size="15.8" fill="#f0f0f0" textLength="62.8" lengthAdjust="spacingAndGlyphs">5906.0000</text>
<text x="1444.0" y="896.375" font-size="15.8" fill="#f0f0f0" textLength="62.8" lengthAdjust="spacingAndGlyphs">5915.0000</text>
<text x="1514.9" y="896.375" font-size="15.8" fill="#f0f0f0" textLength="62.8" lengthAdjust="spacingAndGlyphs">5938.0000</text>
<text x="1585.6000000000001" y="896.375" font-size="15.8" fill="#f0f0f0" textLength="62.8" lengthAdjust="spacingAndGlyphs">6004.0000</text>
<text x="1656.7" y="896.375" font-size="15.8" fill="#f0f0f0" textLength="62.8" lengthAdjust="spacingAndGlyphs">6173.0000</text>
<rect x="816.6" y="902.55" width="10.7" height="24.675" fill="#242424"/>
<rect x="827.3" y="902.55" width="897.3" height="24.675" fill="#424242"/>
<text x="830.8" y="921.05" font-size="15.8" fill="#f0f0f0" textLength="48.5" lengthAdjust="spacingAndGlyphs">ΔE 2000</text>
<text x="940.2" y="921.05" font-size="15.8" fill="#f0f0f0" textLength="40.6" lengthAdjust="spacingAndGlyphs">0.9404</text>
<text x="1019.0" y="921.05" font-size="15.8" fill="#f0f0f0" textLength="40.6" lengthAdjust="spacingAndGlyphs">2.1345</text>
<text x="1090.0" y="921.05" font-size="15.8" fill="#f0f0f0" textLength="40.6" lengthAdjust="spacingAndGlyphs">3.9507</text>
<text x="1160.8" y="921.05" font-size="15.8" fill="#f0f0f0" textLength="40.6" lengthAdjust="spacingAndGlyphs">5.2997</text>
<text x="1231.6000000000001" y="921.05" font-size="15.8" fill="#f0f0f0" textLength="40.6" lengthAdjust="spacingAndGlyphs">6.4626</text>
<text x="1302.4" y="921.05" font-size="15.8" fill="#f0f0f0" textLength="40.6" lengthAdjust="spacingAndGlyphs">7.3824</text>
<text x="1373.5" y="921.05" font-size="15.8" fill="#f0f0f0" textLength="40.6" lengthAdjust="spacingAndGlyphs">8.0971</text>
<text x="1444.0" y="921.05" font-size="15.8" fill="#f0f0f0" textLength="40.6" lengthAdjust="spacingAndGlyphs">8.7087</text>
<text x="1514.9" y="921.05" font-size="15.8" fill="#f0f0f0" textLength="40.6" lengthAdjust="spacingAndGlyphs">9.2297</text>
<text x="1585.6000000000001" y="921.05" font-size="15.8" fill="#f0f0f0" textLength="40.6" lengthAdjust="spacingAndGlyphs">9.4188</text>
<text x="1656.7" y="921.05" font-size="15.8" fill="#f0f0f0" textLength="40.6" lengthAdjust="spacingAndGlyphs">8.3196</text>
<rect x="816.6" y="927.225" width="10.7" height="24.675" fill="#2c2c2c"/>
<rect x="827.3" y="927.225" width="897.3" height="24.675" fill="#7b7b7b"/>
<text x="830.8" y="945.725" font-size="15.8" fill="#f0f0f0" textLength="33.1" lengthAdjust="spacingAndGlyphs">dEITP</text>
<text x="940.2" y="945.725" font-size="15.8" fill="#f0f0f0" textLength="48.0" lengthAdjust="spacingAndGlyphs">60.9707</text>
<text x="1019.0" y="945.725" font-size="15.8" fill="#f0f0f0" textLength="48.0" lengthAdjust="spacingAndGlyphs">11.5998</text>
<text x="1090.0" y="945.725" font-size="15.8" fill="#f0f0f0" textLength="40.6" lengthAdjust="spacingAndGlyphs">8.7235</text>
<text x="1160.8" y="945.725" font-size="15.8" fill="#f0f0f0" textLength="40.6" lengthAdjust="spacingAndGlyphs">8.5749</text>
<text x="1231.6000000000001" y="945.725" font-size="15.8" fill="#f0f0f0" textLength="40.6" lengthAdjust="spacingAndGlyphs">8.7838</text>
<text x="1302.4" y="945.725" font-size="15.8" fill="#f0f0f0" textLength="40.6" lengthAdjust="spacingAndGlyphs">9.1385</text>
<text x="1373.5" y="945.725" font-size="15.8" fill="#f0f0f0" textLength="40.6" lengthAdjust="spacingAndGlyphs">9.3633</text>
<text x="1444.0" y="945.725" font-size="15.8" fill="#f0f0f0" textLength="40.6" lengthAdjust="spacingAndGlyphs">9.4286</text>
<text x="1514.9" y="945.725" font-size="15.8" fill="#f0f0f0" textLength="40.6" lengthAdjust="spacingAndGlyphs">9.0960</text>
<text x="1585.6000000000001" y="945.725" font-size="15.8" fill="#f0f0f0" textLength="40.6" lengthAdjust="spacingAndGlyphs">8.7409</text>
<text x="1656.7" y="945.725" font-size="15.8" fill="#f0f0f0" textLength="40.6" lengthAdjust="spacingAndGlyphs">6.3362</text>
<rect x="150" y="1011" width="1770" height="47" fill="url(#gBar)"/>
<path d="M150.8 1058 V1014 Q150.8 1011 153.8 1011 H259.3 Q262.3 1011 262.3 1014 V1058 Z" fill="url(#gSw)"/>
<rect x="154.0" y="1014.6" width="105.5" height="28" rx="3" fill="#505050"/>
<rect x="154.6" y="1015.2" width="104.5" height="27" rx="3" fill="#000000"/>
<text x="206.55" y="1053.3" font-size="9" fill="#2c2c2c" text-anchor="middle" textLength="4.9" lengthAdjust="spacingAndGlyphs" font-weight="bold">0</text>
<path d="M264.8 1058 V1014 Q264.8 1011 267.8 1011 H373.3 Q376.3 1011 376.3 1014 V1058 Z" fill="url(#gSw)"/>
<rect x="268.0" y="1014.6" width="105.5" height="28" rx="3" fill="#505050"/>
<rect x="268.6" y="1015.2" width="104.5" height="27" rx="3" fill="#1a1a1a"/>
<text x="320.59000000000003" y="1053.3" font-size="9" fill="#2c2c2c" text-anchor="middle" textLength="9.8" lengthAdjust="spacingAndGlyphs" font-weight="bold">10</text>
<path d="M378.9 1058 V1014 Q378.9 1011 381.9 1011 H487.4 Q490.4 1011 490.4 1014 V1058 Z" fill="url(#gSw)"/>
<rect x="382.1" y="1014.6" width="105.5" height="28" rx="3" fill="#505050"/>
<rect x="382.7" y="1015.2" width="104.5" height="27" rx="3" fill="#333333"/>
<text x="434.63" y="1053.3" font-size="9" fill="#2c2c2c" text-anchor="middle" textLength="9.8" lengthAdjust="spacingAndGlyphs" font-weight="bold">20</text>
<path d="M492.9 1058 V1014 Q492.9 1011 495.9 1011 H601.4 Q604.4 1011 604.4 1014 V1058 Z" fill="url(#gSw)"/>
<rect x="496.1" y="1014.6" width="105.5" height="28" rx="3" fill="#505050"/>
<rect x="496.7" y="1015.2" width="104.5" height="27" rx="3" fill="#4d4d4d"/>
<text x="548.6700000000001" y="1053.3" font-size="9" fill="#2c2c2c" text-anchor="middle" textLength="9.8" lengthAdjust="spacingAndGlyphs" font-weight="bold">30</text>
<path d="M607.0 1058 V1014 Q607.0 1011 610.0 1011 H715.5 Q718.5 1011 718.5 1014 V1058 Z" fill="url(#gSw)"/>
<rect x="610.2" y="1014.6" width="105.5" height="28" rx="3" fill="#505050"/>
<rect x="610.8" y="1015.2" width="104.5" height="27" rx="3" fill="#666666"/>
<text x="662.71" y="1053.3" font-size="9" fill="#2c2c2c" text-anchor="middle" textLength="9.8" lengthAdjust="spacingAndGlyphs" font-weight="bold">40</text>
<path d="M721.0 1058 V1014 Q721.0 1011 724.0 1011 H829.5 Q832.5 1011 832.5 1014 V1058 Z" fill="url(#gSw)"/>
<rect x="724.2" y="1014.6" width="105.5" height="28" rx="3" fill="#505050"/>
<rect x="724.8" y="1015.2" width="104.5" height="27" rx="3" fill="#808080"/>
<text x="776.75" y="1053.3" font-size="9" fill="#2c2c2c" text-anchor="middle" textLength="9.8" lengthAdjust="spacingAndGlyphs" font-weight="bold">50</text>
<path d="M835.0 1058 V1014 Q835.0 1011 838.0 1011 H943.5 Q946.5 1011 946.5 1014 V1058 Z" fill="url(#gSw)"/>
<rect x="838.2" y="1014.6" width="105.5" height="28" rx="3" fill="#505050"/>
<rect x="838.8" y="1015.2" width="104.5" height="27" rx="3" fill="#999999"/>
<text x="890.79" y="1053.3" font-size="9" fill="#2c2c2c" text-anchor="middle" textLength="9.8" lengthAdjust="spacingAndGlyphs" font-weight="bold">60</text>
<path d="M949.1 1058 V1014 Q949.1 1011 952.1 1011 H1057.6 Q1060.6 1011 1060.6 1014 V1058 Z" fill="url(#gSw)"/>
<rect x="952.3" y="1014.6" width="105.5" height="28" rx="3" fill="#505050"/>
<rect x="952.9" y="1015.2" width="104.5" height="27" rx="3" fill="#b3b3b3"/>
<text x="1004.8300000000002" y="1053.3" font-size="9" fill="#2c2c2c" text-anchor="middle" textLength="9.8" lengthAdjust="spacingAndGlyphs" font-weight="bold">70</text>
<path d="M1063.1 1058 V1014 Q1063.1 1011 1066.1 1011 H1171.6 Q1174.6 1011 1174.6 1014 V1058 Z" fill="url(#gSw)"/>
<rect x="1066.3" y="1014.6" width="105.5" height="28" rx="3" fill="#505050"/>
<rect x="1066.9" y="1015.2" width="104.5" height="27" rx="3" fill="#cccccc"/>
<text x="1118.8700000000001" y="1053.3" font-size="9" fill="#2c2c2c" text-anchor="middle" textLength="9.8" lengthAdjust="spacingAndGlyphs" font-weight="bold">80</text>
<path d="M1177.2 1058 V1014 Q1177.2 1011 1180.2 1011 H1285.7 Q1288.7 1011 1288.7 1014 V1058 Z" fill="url(#gSw)"/>
<rect x="1180.4" y="1014.6" width="105.5" height="28" rx="3" fill="#505050"/>
<rect x="1181.0" y="1015.2" width="104.5" height="27" rx="3" fill="#e6e6e6"/>
<text x="1232.91" y="1053.3" font-size="9" fill="#2c2c2c" text-anchor="middle" textLength="9.8" lengthAdjust="spacingAndGlyphs" font-weight="bold">90</text>
<path d="M1291.2 1058 V1014 Q1291.2 1011 1294.2 1011 H1399.7 Q1402.7 1011 1402.7 1014 V1058 Z" fill="url(#gSwSel)"/>
<rect x="1295.0" y="1015.2" width="104.5" height="27" rx="3" fill="#ffffff"/>
<text x="1346.95" y="1053.5" font-size="8.5" fill="#ffffff" text-anchor="middle" textLength="13.5" lengthAdjust="spacingAndGlyphs" font-weight="bold">100</text>
<rect x="1715" y="1011.5" width="168" height="23" rx="2" fill="url(#gIco)"/>
<line x1="1749" y1="1012" x2="1749" y2="1034" stroke="#4a4a4a" stroke-width="1"/>
<line x1="1783" y1="1012" x2="1783" y2="1034" stroke="#4a4a4a" stroke-width="1"/>
<line x1="1816.7" y1="1012" x2="1816.7" y2="1034" stroke="#4a4a4a" stroke-width="1"/>
<line x1="1850.8" y1="1012" x2="1850.8" y2="1034" stroke="#4a4a4a" stroke-width="1"/>
<circle cx="1732" cy="1027" r="6" fill="#7a7a7a" stroke="#9a9a9a" stroke-width="0.8"/>
<circle cx="1766" cy="1027" r="6" fill="#7a7a7a" stroke="#9a9a9a" stroke-width="0.8"/>
<circle cx="1800" cy="1027" r="6" fill="#7a7a7a" stroke="#9a9a9a" stroke-width="0.8"/>
<circle cx="1834" cy="1027" r="6" fill="#7a7a7a" stroke="#9a9a9a" stroke-width="0.8"/>
<circle cx="1867" cy="1027" r="6" fill="#7a7a7a" stroke="#9a9a9a" stroke-width="0.8"/>
<rect x="1883" y="1011.5" width="37" height="23" fill="#3a3a3a"/>
<circle cx="1902" cy="1027" r="6" fill="#444"/>
<rect x="1678" y="1026" width="35" height="32" rx="2" fill="#555555"/>
<rect x="1685" y="1030.5" width="21.5" height="21" rx="3" fill="#a0a0a0" stroke="#1a1a1a" stroke-width="1.8"/>
<rect x="1690.7" y="1036.3" width="10" height="10.3" fill="#000000"/>
<rect x="1715" y="1035" width="101.3" height="23" rx="2" fill="url(#gBk)"/>
<rect x="1817" y="1035" width="103" height="23" rx="2" fill="url(#gBk)"/>
<line x1="1816.6" y1="1035" x2="1816.6" y2="1058" stroke="#6a6a6a" stroke-width="1.2"/>
<circle cx="1737.5" cy="1046" r="7.2" fill="url(#gArr)"/>
<circle cx="1897.5" cy="1046" r="7.2" fill="url(#gArr)"/>
<text x="1737.5" y="1050" font-size="13" fill="#333" text-anchor="middle">«</text>
<text x="1897.5" y="1050" font-size="13" fill="#333" text-anchor="middle">»</text>
<text x="1758" y="1052" font-size="16" fill="#2a2a2a" textLength="37.5" lengthAdjust="spacingAndGlyphs">Back</text>
<text x="1838" y="1052" font-size="16" fill="#2a2a2a" textLength="38.5" lengthAdjust="spacingAndGlyphs">Next</text>
<path d="M1632.2 996.4 L1668.8 1004.1 L1670.8 1027.3 L1640.6 1029.2 L1697.1 1032.4 L1656.6 1044.6 L1632.2 1032.4 Z" fill="none" stroke="#d8d8d8" stroke-width="5.6" stroke-linejoin="round" opacity="0.7"/>
<path d="M1632.2 996.4 L1668.8 1004.1 L1670.8 1027.3 L1640.6 1029.2 L1697.1 1032.4 L1656.6 1044.6 L1632.2 1032.4 Z" fill="none" stroke="#8c2834" stroke-width="3.4" opacity="0.92" stroke-linejoin="round"/>
<path d="M1641.8 1009.3 L1653.4 1023.4 L1674 995.8" fill="none" stroke="#d0d0d0" stroke-width="5.4" stroke-linejoin="round" stroke-linecap="round" opacity="0.75"/>
<path d="M1641.8 1009.3 L1653.4 1023.4 L1674 995.8" fill="none" stroke="#2a2a2a" stroke-width="3.4" stroke-linejoin="round" stroke-linecap="round"/>
<text x="1675" y="1024.6" font-size="27.5" font-weight="bold" fill="none" stroke="#d0d0d0" stroke-width="3.2" stroke-linejoin="round" opacity="0.75" textLength="149" lengthAdjust="spacingAndGlyphs">NOTEBOOK</text>
<text x="1675" y="1024.6" font-size="27.5" font-weight="bold" fill="#902838" stroke="#902838" stroke-width="0.5" stroke-linejoin="round" opacity="0.8" textLength="149" lengthAdjust="spacingAndGlyphs">NOTEBOOK</text>
<text x="1825" y="1024.6" font-size="27.5" font-weight="normal" fill="none" stroke="#d0d0d0" stroke-width="3.2" stroke-linejoin="round" opacity="0.75" textLength="88" lengthAdjust="spacingAndGlyphs">CHECK</text>
<text x="1825" y="1024.6" font-size="27.5" font-weight="normal" fill="#222222" stroke="#222222" stroke-width="0.9" stroke-linejoin="round" opacity="0.8" textLength="88" lengthAdjust="spacingAndGlyphs">CHECK</text>
</svg></body></html>
